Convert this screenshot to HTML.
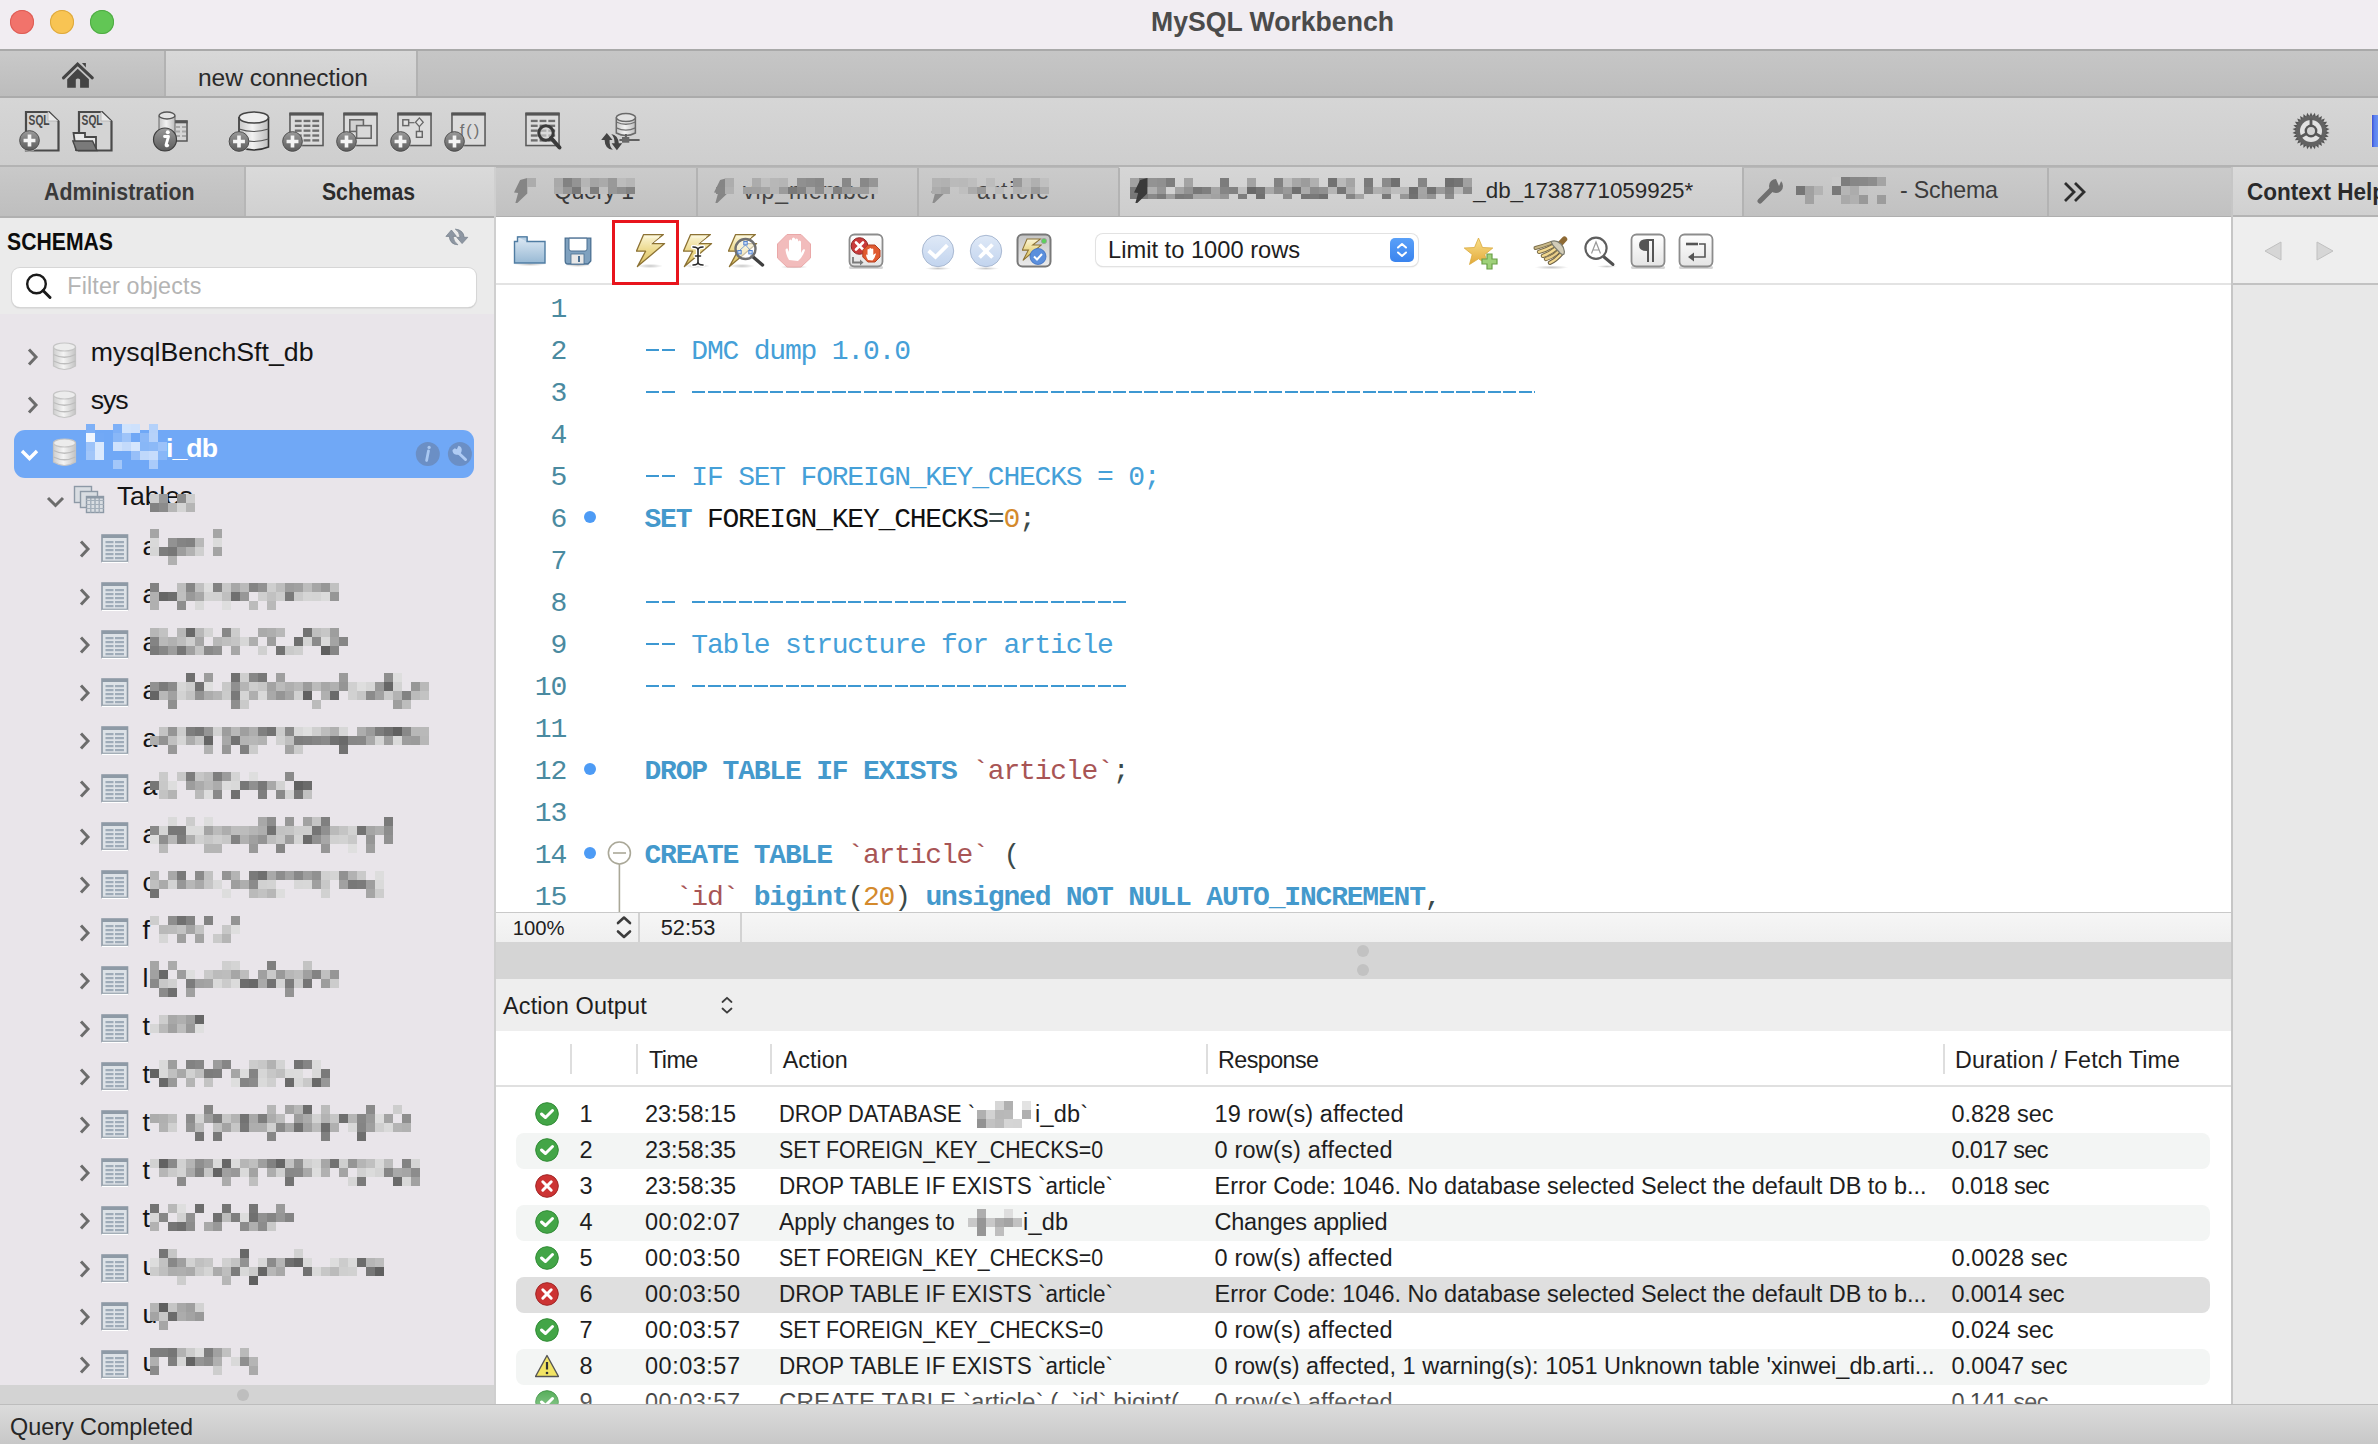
<!DOCTYPE html>
<html><head><meta charset="utf-8">
<style>
*{margin:0;padding:0;box-sizing:border-box}
html,body{width:2378px;height:1444px;overflow:hidden;background:#e9e5ea;font-family:"Liberation Sans",sans-serif;position:relative}
.a{position:absolute}
.t{position:absolute;white-space:nowrap;line-height:1}
.ln{position:absolute;left:0;width:70px;text-align:right;height:42px;line-height:42px;font-family:"Liberation Mono",monospace;font-size:28px;letter-spacing:-1.2px;color:#4a8aa0;white-space:nowrap}
.code{position:absolute;left:148.5px;height:42px;line-height:42px;font-family:"Liberation Mono",monospace;font-size:28px;letter-spacing:-1.2px;color:#111;white-space:pre}
.kw{font-weight:bold;color:#4499cc}.cm{color:#45a0d8}.st{color:#a85555}.nu{color:#d48a2c}.pu{color:#3b4a4a}
.hid{color:transparent}
.blur{display:inline-block;height:22px;vertical-align:-3px}
</style></head><body>
<svg class="a" style="left:0;top:0;width:0;height:0"><defs>
<linearGradient id="gBolt" x1="0" y1="0" x2="0" y2="1"><stop offset="0" stop-color="#fbf6d8"/><stop offset="0.5" stop-color="#ecd98c"/><stop offset="1" stop-color="#d9bf62"/></linearGradient>
<linearGradient id="gBoltG" x1="0" y1="0" x2="0" y2="1"><stop offset="0" stop-color="#8a8a8a"/><stop offset="1" stop-color="#6a6a6a"/></linearGradient>
<linearGradient id="gFold" x1="0" y1="0" x2="0" y2="1"><stop offset="0" stop-color="#dde9f4"/><stop offset="1" stop-color="#98b9d4"/></linearGradient>
<linearGradient id="gBtn" x1="0" y1="0" x2="0" y2="1"><stop offset="0" stop-color="#ffffff"/><stop offset="1" stop-color="#e4e4e4"/></linearGradient>
<linearGradient id="gCirc" x1="0" y1="0" x2="0" y2="1"><stop offset="0" stop-color="#dfe9f7"/><stop offset="1" stop-color="#c2d4ee"/></linearGradient>
<linearGradient id="gPlus" x1="0" y1="0" x2="0" y2="1"><stop offset="0" stop-color="#9a9a9a"/><stop offset="1" stop-color="#5c5c5c"/></linearGradient>
<linearGradient id="gDb" x1="0" y1="0" x2="1" y2="0"><stop offset="0" stop-color="#c8c8c8"/><stop offset="0.45" stop-color="#f2f2f2"/><stop offset="1" stop-color="#bdbdbd"/></linearGradient>
<linearGradient id="gDbS" x1="0" y1="0" x2="1" y2="0"><stop offset="0" stop-color="#cfcfcf"/><stop offset="0.45" stop-color="#f4f4f4"/><stop offset="1" stop-color="#c4c4c4"/></linearGradient>
<radialGradient id="gShadow"><stop offset="0" stop-color="#000" stop-opacity="0.22"/><stop offset="1" stop-color="#000" stop-opacity="0"/></radialGradient>



</defs></svg>
<div class="a" style="left:0px;top:0px;width:2378px;height:50px;background:#f1edf2;"></div>
<div class="a" style="left:0px;top:49px;width:2378px;height:2px;background:#a9a9a9;"></div>
<div class="a" style="left:10px;top:10px;width:24px;height:24px;background:#f1736b;border-radius:50%;box-shadow:inset 0 0 0 1px #dd5d55"></div>
<div class="a" style="left:50px;top:10px;width:24px;height:24px;background:#f8c453;border-radius:50%;box-shadow:inset 0 0 0 1px #dda83d"></div>
<div class="a" style="left:90px;top:10px;width:24px;height:24px;background:#62c655;border-radius:50%;box-shadow:inset 0 0 0 1px #4fab44"></div>
<div class="t" style="left:1151px;top:8.47px;font-size:27.8px;color:#4b4b4b;font-weight:bold;transform:scaleX(0.9572);transform-origin:0 0;">MySQL Workbench</div>
<div class="a" style="left:0px;top:51px;width:2378px;height:46px;background:linear-gradient(#c6c6c6,#bdbdbd);"></div>
<div class="a" style="left:0px;top:51px;width:165px;height:46px;background:linear-gradient(#c9c9c9,#bcbcbc);"></div>
<div class="a" style="left:165px;top:51px;width:252px;height:46px;background:linear-gradient(#d8d8d8,#cdcdcd);"></div>
<div class="a" style="left:164px;top:51px;width:2px;height:46px;background:#b2b2b2;"></div>
<div class="a" style="left:416px;top:51px;width:2px;height:46px;background:#b2b2b2;"></div>
<div class="t" style="left:198px;top:65.88px;font-size:24.6px;color:#2a2a2a;letter-spacing:-0.073px;">new connection</div>
<svg class="a" style="left:55px;top:55px" width="45" height="40" viewBox="0 0 45 40"><path d="M8.5 22.8 L22.6 9.2 L37.3 22.8" fill="none" stroke="#444" stroke-width="3.1" stroke-linecap="round"/><path d="M26.9 8 H30.9 V12.6 Z" fill="#444"/><path d="M12.2 24.3 L22.7 13.8 L33.9 24.3 V32.8 H25.1 V24.6 Q22.9 22.4 20.8 24.6 V32.8 H12.2 Z" fill="#444"/></svg>
<div class="a" style="left:0px;top:96px;width:2378px;height:2px;background:#ababab;"></div>
<div class="a" style="left:0px;top:98px;width:2378px;height:68px;background:linear-gradient(#d6d6d6,#cecece);"></div>
<div class="a" style="left:0px;top:165px;width:2378px;height:2px;background:#b3b3b3;"></div>
<svg class="a" style="left:15px;top:110px" width="50" height="44" viewBox="0 0 50 44"><path d="M11 2 H34 L43.5 11.5 V40.5 H11 Z" fill="#d4d4d4" stroke="#4a4a4a" stroke-width="2.2"/><path d="M33 1.5 V11 H43" fill="#eaeaea" stroke="#b0b0b0" stroke-width="0.8"/><text x="13.6" y="15" font-family="Liberation Sans" font-weight="bold" font-size="14" fill="#474747" textLength="21" lengthAdjust="spacingAndGlyphs">SQL</text><svg x="3" y="19" width="23" height="23" viewBox="0 0 24 24"><circle cx="12" cy="12.8" r="10.8" fill="#e4e4e4" opacity="0.7"/><circle cx="12" cy="12" r="10.3" fill="url(#gPlus)" stroke="#4a4a4a" stroke-width="1"/><path d="M12 5.8 V18.2 M5.8 12 H18.2" stroke="#f4f4f4" stroke-width="3.8"/></svg></svg>
<svg class="a" style="left:72px;top:110px" width="50" height="44" viewBox="0 0 50 44"><path d="M7 2 H30 L39.5 11.5 V40.5 H7 Z" fill="#d4d4d4" stroke="#4a4a4a" stroke-width="2.2"/><path d="M29 1.5 V11 H39" fill="#eaeaea" stroke="#b0b0b0" stroke-width="0.8"/><text x="9.6" y="15" font-family="Liberation Sans" font-weight="bold" font-size="14" fill="#474747" textLength="21" lengthAdjust="spacingAndGlyphs">SQL</text><path d="M1.5 23 H13 V27 H24 V40 H4 Z" fill="#e8e8e8" stroke="#474747" stroke-width="1.8"/><path d="M0.8 31 H20.5 L25 40.5 H4.5 Z" fill="#7a7a7a" stroke="#474747" stroke-width="1.4"/></svg>
<svg class="a" style="left:150px;top:108px" width="42" height="46" viewBox="0 0 42 46"><rect x="17.5" y="13" width="19.5" height="20" fill="#d6d6d6" stroke="#555" stroke-width="1.5"/><rect x="17" y="12.5" width="20.5" height="2.8" fill="#555"/><rect x="20" y="18" width="4" height="2" fill="#a8a8a8"/><rect x="20" y="22.5" width="4" height="2" fill="#a8a8a8"/><rect x="20" y="27" width="4" height="2" fill="#a8a8a8"/><rect x="26" y="18" width="4" height="2" fill="#a8a8a8"/><rect x="26" y="22.5" width="4" height="2" fill="#a8a8a8"/><rect x="26" y="27" width="4" height="2" fill="#a8a8a8"/><rect x="32" y="18" width="4" height="2" fill="#a8a8a8"/><rect x="32" y="22.5" width="4" height="2" fill="#a8a8a8"/><rect x="32" y="27" width="4" height="2" fill="#a8a8a8"/><path d="M9 8 V26 Q17 29 25 26 V8" fill="url(#gDb)" stroke="#666" stroke-width="1"/><ellipse cx="17" cy="7.5" rx="8" ry="3.5" fill="#e4e4e4" stroke="#555" stroke-width="1.4"/><circle cx="15" cy="31.5" r="11.5" fill="url(#gPlus)" stroke="#3e3e3e" stroke-width="1.2"/><circle cx="17.8" cy="24.2" r="2" fill="#fff"/><path d="M14.5 28.5 H18.5 L16 37 Q15.8 38.6 17.8 37.5" fill="none" stroke="#fff" stroke-width="2.8" stroke-linecap="round" stroke-linejoin="round"/></svg>
<svg class="a" style="left:225px;top:108px" width="48" height="48" viewBox="0 0 48 48"><path d="M14 9 V39 Q28.5 45 43.5 39 V9" fill="url(#gDb)" stroke="#333" stroke-width="1.6"/><path d="M14 21 Q28.5 26 43.5 21 M14 31 Q28.5 36 43.5 31" fill="none" stroke="#555" stroke-width="1.2"/><ellipse cx="28.8" cy="9.5" rx="14.6" ry="5.5" fill="#ededed" stroke="#444" stroke-width="1.6"/><svg x="2.5" y="22" width="23" height="23" viewBox="0 0 24 24"><circle cx="12" cy="12.8" r="10.8" fill="#e4e4e4" opacity="0.7"/><circle cx="12" cy="12" r="10.3" fill="url(#gPlus)" stroke="#4a4a4a" stroke-width="1"/><path d="M12 5.8 V18.2 M5.8 12 H18.2" stroke="#f4f4f4" stroke-width="3.8"/></svg></svg>
<svg class="a" style="left:276px;top:108px" width="50" height="48" viewBox="0 0 50 48"><svg x="13" y="4" width="35" height="35" viewBox="0 0 36 36"><svg width="100%" height="100%" viewBox="0 0 36 36"><rect x="1" y="1.5" width="34" height="33" fill="#dcdcdc" stroke="#5a5a5a" stroke-width="1.6"/><rect x="0.5" y="0.5" width="35" height="3.2" fill="#555"/></svg><rect x="6" y="8" width="7" height="2.4" fill="#6e6e6e"/><rect x="6" y="13" width="7" height="2.4" fill="#6e6e6e"/><rect x="6" y="18" width="7" height="2.4" fill="#6e6e6e"/><rect x="6" y="23" width="7" height="2.4" fill="#6e6e6e"/><rect x="6" y="28" width="7" height="2.4" fill="#6e6e6e"/><rect x="15" y="8" width="7" height="2.4" fill="#6e6e6e"/><rect x="15" y="13" width="7" height="2.4" fill="#6e6e6e"/><rect x="15" y="18" width="7" height="2.4" fill="#6e6e6e"/><rect x="15" y="23" width="7" height="2.4" fill="#6e6e6e"/><rect x="15" y="28" width="7" height="2.4" fill="#6e6e6e"/><rect x="24" y="8" width="7" height="2.4" fill="#6e6e6e"/><rect x="24" y="13" width="7" height="2.4" fill="#6e6e6e"/><rect x="24" y="18" width="7" height="2.4" fill="#6e6e6e"/><rect x="24" y="23" width="7" height="2.4" fill="#6e6e6e"/><rect x="24" y="28" width="7" height="2.4" fill="#6e6e6e"/></svg><svg x="5" y="22" width="23" height="23" viewBox="0 0 24 24"><circle cx="12" cy="12.8" r="10.8" fill="#e4e4e4" opacity="0.7"/><circle cx="12" cy="12" r="10.3" fill="url(#gPlus)" stroke="#4a4a4a" stroke-width="1"/><path d="M12 5.8 V18.2 M5.8 12 H18.2" stroke="#f4f4f4" stroke-width="3.8"/></svg></svg>
<svg class="a" style="left:330px;top:108px" width="50" height="48" viewBox="0 0 50 48"><svg x="13" y="4" width="35" height="35" viewBox="0 0 36 36"><svg width="100%" height="100%" viewBox="0 0 36 36"><rect x="1" y="1.5" width="34" height="33" fill="#dcdcdc" stroke="#5a5a5a" stroke-width="1.6"/><rect x="0.5" y="0.5" width="35" height="3.2" fill="#555"/></svg><rect x="7" y="8" width="14" height="12" fill="#d0d0d0" stroke="#666" stroke-width="1.6"/><rect x="14" y="14" width="15" height="13" fill="#d8d8d8" stroke="#666" stroke-width="1.6"/></svg><svg x="5" y="22" width="23" height="23" viewBox="0 0 24 24"><circle cx="12" cy="12.8" r="10.8" fill="#e4e4e4" opacity="0.7"/><circle cx="12" cy="12" r="10.3" fill="url(#gPlus)" stroke="#4a4a4a" stroke-width="1"/><path d="M12 5.8 V18.2 M5.8 12 H18.2" stroke="#f4f4f4" stroke-width="3.8"/></svg></svg>
<svg class="a" style="left:384px;top:108px" width="50" height="48" viewBox="0 0 50 48"><svg x="13" y="4" width="35" height="35" viewBox="0 0 36 36"><svg width="100%" height="100%" viewBox="0 0 36 36"><rect x="1" y="1.5" width="34" height="33" fill="#dcdcdc" stroke="#5a5a5a" stroke-width="1.6"/><rect x="0.5" y="0.5" width="35" height="3.2" fill="#555"/></svg><rect x="6" y="8" width="6" height="6" fill="#e2e2e2" stroke="#666" stroke-width="1.5"/><path d="M12 11 H18" stroke="#666" stroke-width="1.2"/><path d="M23 6 L27 10.5 L23 15 L19 10.5 Z" fill="#e2e2e2" stroke="#666" stroke-width="1.3"/><path d="M23 15 V20" stroke="#666" stroke-width="1.2"/><rect x="20" y="20" width="6" height="6" fill="#e2e2e2" stroke="#666" stroke-width="1.5"/></svg><svg x="5" y="22" width="23" height="23" viewBox="0 0 24 24"><circle cx="12" cy="12.8" r="10.8" fill="#e4e4e4" opacity="0.7"/><circle cx="12" cy="12" r="10.3" fill="url(#gPlus)" stroke="#4a4a4a" stroke-width="1"/><path d="M12 5.8 V18.2 M5.8 12 H18.2" stroke="#f4f4f4" stroke-width="3.8"/></svg></svg>
<svg class="a" style="left:438px;top:108px" width="50" height="48" viewBox="0 0 50 48"><svg x="13" y="4" width="35" height="35" viewBox="0 0 36 36"><svg width="100%" height="100%" viewBox="0 0 36 36"><rect x="1" y="1.5" width="34" height="33" fill="#dcdcdc" stroke="#5a5a5a" stroke-width="1.6"/><rect x="0.5" y="0.5" width="35" height="3.2" fill="#555"/></svg><text x="9" y="25" font-family="Liberation Sans" font-size="17" fill="#707070" textLength="20" lengthAdjust="spacing">f()</text></svg><svg x="5" y="22" width="23" height="23" viewBox="0 0 24 24"><circle cx="12" cy="12.8" r="10.8" fill="#e4e4e4" opacity="0.7"/><circle cx="12" cy="12" r="10.3" fill="url(#gPlus)" stroke="#4a4a4a" stroke-width="1"/><path d="M12 5.8 V18.2 M5.8 12 H18.2" stroke="#f4f4f4" stroke-width="3.8"/></svg></svg>
<svg class="a" style="left:522px;top:108px" width="42" height="44" viewBox="0 0 42 44"><svg x="3" y="4" width="35" height="35" viewBox="0 0 36 36"><svg width="100%" height="100%" viewBox="0 0 36 36"><rect x="1" y="1.5" width="34" height="33" fill="#dcdcdc" stroke="#5a5a5a" stroke-width="1.6"/><rect x="0.5" y="0.5" width="35" height="3.2" fill="#555"/></svg><rect x="6" y="8" width="7" height="2.4" fill="#6e6e6e"/><rect x="6" y="13" width="7" height="2.4" fill="#6e6e6e"/><rect x="6" y="18" width="7" height="2.4" fill="#6e6e6e"/><rect x="6" y="23" width="7" height="2.4" fill="#6e6e6e"/><rect x="6" y="28" width="7" height="2.4" fill="#6e6e6e"/><rect x="15" y="8" width="7" height="2.4" fill="#6e6e6e"/><rect x="15" y="13" width="7" height="2.4" fill="#6e6e6e"/><rect x="15" y="18" width="7" height="2.4" fill="#6e6e6e"/><rect x="15" y="23" width="7" height="2.4" fill="#6e6e6e"/><rect x="15" y="28" width="7" height="2.4" fill="#6e6e6e"/><rect x="24" y="8" width="7" height="2.4" fill="#6e6e6e"/><rect x="24" y="13" width="7" height="2.4" fill="#6e6e6e"/><rect x="24" y="18" width="7" height="2.4" fill="#6e6e6e"/><rect x="24" y="23" width="7" height="2.4" fill="#6e6e6e"/><rect x="24" y="28" width="7" height="2.4" fill="#6e6e6e"/></svg><circle cx="24" cy="25" r="7.2" fill="#d8d8d8" fill-opacity="0.6" stroke="#3a3a3a" stroke-width="3"/><path d="M29 30 L37.5 39.5" stroke="#3a3a3a" stroke-width="4" stroke-linecap="round"/></svg>
<svg class="a" style="left:595px;top:105px" width="55" height="55" viewBox="0 0 55 55"><path d="M21.3 12.6 V28 Q30.9 33 40.4 28 V12.6" fill="url(#gDb)" stroke="#6a6a6a" stroke-width="1.5"/><path d="M21.3 17 Q30.9 21.5 40.4 17 M21.3 22.8 Q30.9 27.3 40.4 22.8" fill="none" stroke="#707070" stroke-width="1.3"/><ellipse cx="30.9" cy="12.6" rx="9.6" ry="4" fill="#e2e2e2" stroke="#6a6a6a" stroke-width="1.5"/><path d="M30.9 29 V32.5 M24.4 34.9 H44.6" stroke="#606060" stroke-width="2"/><rect x="27" y="32" width="7.3" height="5.7" fill="#686868"/><path d="M6.2 35 L11.8 28 L17.6 35 L14.6 35 Q14.2 41.5 17.8 44.8 Q9.8 44 9.6 35 Z" fill="#444"/><path d="M16.2 29 Q23 30 23.8 38.3 L27.2 38.3 L21.9 45.3 L16.6 38.3 L19.6 38.3 Q19.6 32 16.2 29 Z" fill="#444"/></svg>
<svg class="a" style="left:2291px;top:111px" width="40" height="40" viewBox="0 0 40 40"><g transform="translate(20,20)"><path d="M-1.9 -14.5 L0 -18.6 L1.9 -14.5 Z" fill="#555" transform="rotate(0)"/><path d="M-1.9 -14.5 L0 -18.6 L1.9 -14.5 Z" fill="#555" transform="rotate(12)"/><path d="M-1.9 -14.5 L0 -18.6 L1.9 -14.5 Z" fill="#555" transform="rotate(24)"/><path d="M-1.9 -14.5 L0 -18.6 L1.9 -14.5 Z" fill="#555" transform="rotate(36)"/><path d="M-1.9 -14.5 L0 -18.6 L1.9 -14.5 Z" fill="#555" transform="rotate(48)"/><path d="M-1.9 -14.5 L0 -18.6 L1.9 -14.5 Z" fill="#555" transform="rotate(60)"/><path d="M-1.9 -14.5 L0 -18.6 L1.9 -14.5 Z" fill="#555" transform="rotate(72)"/><path d="M-1.9 -14.5 L0 -18.6 L1.9 -14.5 Z" fill="#555" transform="rotate(84)"/><path d="M-1.9 -14.5 L0 -18.6 L1.9 -14.5 Z" fill="#555" transform="rotate(96)"/><path d="M-1.9 -14.5 L0 -18.6 L1.9 -14.5 Z" fill="#555" transform="rotate(108)"/><path d="M-1.9 -14.5 L0 -18.6 L1.9 -14.5 Z" fill="#555" transform="rotate(120)"/><path d="M-1.9 -14.5 L0 -18.6 L1.9 -14.5 Z" fill="#555" transform="rotate(132)"/><path d="M-1.9 -14.5 L0 -18.6 L1.9 -14.5 Z" fill="#555" transform="rotate(144)"/><path d="M-1.9 -14.5 L0 -18.6 L1.9 -14.5 Z" fill="#555" transform="rotate(156)"/><path d="M-1.9 -14.5 L0 -18.6 L1.9 -14.5 Z" fill="#555" transform="rotate(168)"/><path d="M-1.9 -14.5 L0 -18.6 L1.9 -14.5 Z" fill="#555" transform="rotate(180)"/><path d="M-1.9 -14.5 L0 -18.6 L1.9 -14.5 Z" fill="#555" transform="rotate(192)"/><path d="M-1.9 -14.5 L0 -18.6 L1.9 -14.5 Z" fill="#555" transform="rotate(204)"/><path d="M-1.9 -14.5 L0 -18.6 L1.9 -14.5 Z" fill="#555" transform="rotate(216)"/><path d="M-1.9 -14.5 L0 -18.6 L1.9 -14.5 Z" fill="#555" transform="rotate(228)"/><path d="M-1.9 -14.5 L0 -18.6 L1.9 -14.5 Z" fill="#555" transform="rotate(240)"/><path d="M-1.9 -14.5 L0 -18.6 L1.9 -14.5 Z" fill="#555" transform="rotate(252)"/><path d="M-1.9 -14.5 L0 -18.6 L1.9 -14.5 Z" fill="#555" transform="rotate(264)"/><path d="M-1.9 -14.5 L0 -18.6 L1.9 -14.5 Z" fill="#555" transform="rotate(276)"/><path d="M-1.9 -14.5 L0 -18.6 L1.9 -14.5 Z" fill="#555" transform="rotate(288)"/><path d="M-1.9 -14.5 L0 -18.6 L1.9 -14.5 Z" fill="#555" transform="rotate(300)"/><path d="M-1.9 -14.5 L0 -18.6 L1.9 -14.5 Z" fill="#555" transform="rotate(312)"/><path d="M-1.9 -14.5 L0 -18.6 L1.9 -14.5 Z" fill="#555" transform="rotate(324)"/><path d="M-1.9 -14.5 L0 -18.6 L1.9 -14.5 Z" fill="#555" transform="rotate(336)"/><path d="M-1.9 -14.5 L0 -18.6 L1.9 -14.5 Z" fill="#555" transform="rotate(348)"/><circle r="15.2" fill="#626262"/><circle r="11" fill="#e2e2e2"/><path d="M0 -4 V-12.5" stroke="#5a5a5a" stroke-width="2.8" transform="rotate(0)"/><path d="M0 -4 V-12.5" stroke="#5a5a5a" stroke-width="2.8" transform="rotate(120)"/><path d="M0 -4 V-12.5" stroke="#5a5a5a" stroke-width="2.8" transform="rotate(240)"/><circle r="6.4" fill="#555"/><circle r="4" fill="#d4d4d4"/></g></svg>
<div class="a" style="left:2371px;top:115px;width:7px;height:32px;background:linear-gradient(90deg,#3c4fd6,#5a80ee 40%,#6a92f2);border-left:1px solid #e0dccc"></div>
<div class="a" style="left:0px;top:167px;width:245px;height:50px;background:linear-gradient(#c9c9c9,#bebebe);"></div>
<div class="a" style="left:245px;top:167px;width:250px;height:50px;background:linear-gradient(#dadada,#d0d0d0);"></div>
<div class="a" style="left:244px;top:167px;width:2px;height:50px;background:#b6b6b6;"></div>
<div class="t" style="left:43.5px;top:180.93px;font-size:23px;color:#3a3a3a;font-weight:bold;transform:scaleX(0.9274);transform-origin:0 0;">Administration</div>
<div class="t" style="left:322px;top:180.93px;font-size:23px;color:#2c2c2c;font-weight:bold;transform:scaleX(0.9207);transform-origin:0 0;">Schemas</div>
<div class="a" style="left:0px;top:216px;width:495px;height:2px;background:#b0b0b0;"></div>
<div class="a" style="left:496px;top:167px;width:1736px;height:50px;background:linear-gradient(#cbcbcb,#c1c1c1);"></div>
<div class="a" style="left:496px;top:167px;width:1736px;height:1px;background:#b9b9b9;"></div>
<div class="a" style="left:1119px;top:167px;width:623px;height:50px;background:linear-gradient(#d6d6d6,#cdcdcd);"></div>
<div class="a" style="left:696px;top:168px;width:2px;height:48px;background:#b3b3b3;"></div>
<div class="a" style="left:917px;top:168px;width:2px;height:48px;background:#b3b3b3;"></div>
<div class="a" style="left:1118px;top:168px;width:2px;height:48px;background:#b3b3b3;"></div>
<div class="a" style="left:1742px;top:168px;width:2px;height:48px;background:#b3b3b3;"></div>
<div class="a" style="left:2047px;top:168px;width:2px;height:48px;background:#b3b3b3;"></div>
<div class="a" style="left:496px;top:216px;width:1736px;height:2px;background:#afafaf;"></div>
<svg class="a" style="left:513.6px;top:177px" width="16" height="28" viewBox="0 0 16 28"><path d="M6.1 3 L13.3 1 V16.5 L3.3 26 H1.4 L4.1 16 L0 15.4 Z" fill="#858585"/></svg>
<svg class="a" style="left:714px;top:177px" width="16" height="28" viewBox="0 0 16 28"><path d="M6.1 3 L13.3 1 V16.5 L3.3 26 H1.4 L4.1 16 L0 15.4 Z" fill="#858585"/></svg>
<svg class="a" style="left:931px;top:177px" width="16" height="28" viewBox="0 0 16 28"><path d="M6.1 3 L13.3 1 V16.5 L3.3 26 H1.4 L4.1 16 L0 15.4 Z" fill="#8c8c8c"/></svg>
<div class="t" style="left:554px;top:179.53px;font-size:23px;color:#3a3a3a;letter-spacing:-0.303px;">Query 1</div>
<svg class="a" style="left:0;top:0" width="2378" height="1444" shape-rendering="crispEdges"><rect x="527" y="178" width="9" height="9" fill="#acacac"/></svg>
<svg class="a" style="left:0;top:0" width="2378" height="1444" shape-rendering="crispEdges"><rect x="554" y="178" width="9" height="9" fill="#a9a9a9"/><rect x="563" y="178" width="9" height="9" fill="#828282"/><rect x="572" y="178" width="9" height="9" fill="#949494"/><rect x="581" y="178" width="9" height="9" fill="#b5b5b5"/><rect x="590" y="178" width="9" height="9" fill="#a5a5a5"/><rect x="599" y="178" width="9" height="9" fill="#aaaaaa"/><rect x="608" y="178" width="9" height="9" fill="#999999"/><rect x="617" y="178" width="9" height="9" fill="#bcbcbc"/><rect x="626" y="178" width="9" height="9" fill="#b6b6b6"/><rect x="554" y="187" width="9" height="7" fill="#acacac"/><rect x="563" y="187" width="9" height="7" fill="#969696"/><rect x="572" y="187" width="9" height="7" fill="#797979"/><rect x="581" y="187" width="9" height="7" fill="#bdbdbd"/><rect x="590" y="187" width="9" height="7" fill="#7e7e7e"/><rect x="599" y="187" width="9" height="7" fill="#bfbfbf"/><rect x="608" y="187" width="9" height="7" fill="#989898"/><rect x="617" y="187" width="9" height="7" fill="#8f8f8f"/><rect x="626" y="187" width="9" height="7" fill="#848484"/></svg>
<div class="t" style="left:743px;top:179.53px;font-size:23px;color:#444;letter-spacing:0.939px;">vip_member</div>
<svg class="a" style="left:0;top:0" width="2378" height="1444" shape-rendering="crispEdges"><rect x="716" y="187" width="9" height="7" fill="#868686"/></svg>
<svg class="a" style="left:0;top:0" width="2378" height="1444" shape-rendering="crispEdges"><rect x="725" y="178" width="9" height="9" fill="#adadad"/><rect x="725" y="187" width="9" height="7" fill="#b1b1b1"/></svg>
<svg class="a" style="left:0;top:0" width="2378" height="1444" shape-rendering="crispEdges"><rect x="752" y="178" width="9" height="9" fill="#acacac"/><rect x="761" y="178" width="9" height="9" fill="#bfbfbf"/><rect x="770" y="178" width="9" height="9" fill="#b7b7b7"/><rect x="779" y="178" width="9" height="9" fill="#b5b5b5"/><rect x="797" y="178" width="9" height="9" fill="#909090"/><rect x="806" y="178" width="9" height="9" fill="#8c8c8c"/><rect x="815" y="178" width="9" height="9" fill="#888888"/><rect x="842" y="178" width="9" height="9" fill="#888888"/><rect x="860" y="178" width="9" height="9" fill="#888888"/><rect x="869" y="178" width="9" height="9" fill="#969696"/><rect x="743" y="187" width="9" height="7" fill="#a0a0a0"/><rect x="752" y="187" width="9" height="7" fill="#a1a1a1"/><rect x="761" y="187" width="9" height="7" fill="#a6a6a6"/><rect x="770" y="187" width="9" height="7" fill="#b6b6b6"/><rect x="779" y="187" width="9" height="7" fill="#9b9b9b"/><rect x="788" y="187" width="9" height="7" fill="#797979"/><rect x="797" y="187" width="9" height="7" fill="#848484"/><rect x="806" y="187" width="9" height="7" fill="#a9a9a9"/><rect x="815" y="187" width="9" height="7" fill="#8c8c8c"/><rect x="824" y="187" width="9" height="7" fill="#b7b7b7"/><rect x="833" y="187" width="9" height="7" fill="#808080"/><rect x="842" y="187" width="9" height="7" fill="#999999"/><rect x="851" y="187" width="9" height="7" fill="#9f9f9f"/><rect x="860" y="187" width="9" height="7" fill="#9c9c9c"/><rect x="869" y="187" width="9" height="7" fill="#bcbcbc"/></svg>
<div class="t" style="left:977px;top:179.53px;font-size:23px;color:#444;letter-spacing:1.774px;">article</div>
<svg class="a" style="left:0;top:0" width="2378" height="1444" shape-rendering="crispEdges"><rect x="932" y="178" width="9" height="9" fill="#b3b3b3"/><rect x="941" y="178" width="9" height="9" fill="#b1b1b1"/><rect x="950" y="178" width="9" height="9" fill="#bababa"/><rect x="959" y="178" width="9" height="9" fill="#b9b9b9"/><rect x="932" y="187" width="9" height="7" fill="#acacac"/><rect x="941" y="187" width="9" height="7" fill="#a5a5a5"/><rect x="959" y="187" width="9" height="7" fill="#bfbfbf"/></svg>
<svg class="a" style="left:0;top:0" width="2378" height="1444" shape-rendering="crispEdges"><rect x="968" y="178" width="9" height="9" fill="#bebebe"/><rect x="986" y="178" width="9" height="9" fill="#bcbcbc"/><rect x="1013" y="178" width="9" height="9" fill="#999999"/><rect x="1022" y="178" width="9" height="9" fill="#bbbbbb"/><rect x="1031" y="178" width="9" height="9" fill="#b0b0b0"/><rect x="1040" y="178" width="9" height="9" fill="#c0c0c0"/><rect x="968" y="187" width="9" height="7" fill="#ababab"/><rect x="977" y="187" width="9" height="7" fill="#9a9a9a"/><rect x="986" y="187" width="9" height="7" fill="#c2c2c2"/><rect x="995" y="187" width="9" height="7" fill="#b9b9b9"/><rect x="1004" y="187" width="9" height="7" fill="#c5c5c5"/><rect x="1013" y="187" width="9" height="7" fill="#b1b1b1"/><rect x="1022" y="187" width="9" height="7" fill="#b6b6b6"/><rect x="1031" y="187" width="9" height="7" fill="#9b9b9b"/><rect x="1040" y="187" width="9" height="7" fill="#aeaeae"/></svg>
<svg class="a" style="left:0;top:0" width="2378" height="1444" shape-rendering="crispEdges"><rect x="1130" y="178" width="9" height="9" fill="#a2a2a2"/><rect x="1139" y="178" width="9" height="9" fill="#797979"/><rect x="1148" y="178" width="9" height="9" fill="#939393"/><rect x="1157" y="178" width="9" height="9" fill="#909090"/><rect x="1166" y="178" width="9" height="9" fill="#7e7e7e"/><rect x="1184" y="178" width="9" height="9" fill="#a3a3a3"/><rect x="1220" y="178" width="9" height="9" fill="#7c7c7c"/><rect x="1247" y="178" width="9" height="9" fill="#a3a3a3"/><rect x="1274" y="178" width="9" height="9" fill="#828282"/><rect x="1283" y="178" width="9" height="9" fill="#bdbdbd"/><rect x="1292" y="178" width="9" height="9" fill="#a7a7a7"/><rect x="1301" y="178" width="9" height="9" fill="#9c9c9c"/><rect x="1310" y="178" width="9" height="9" fill="#b0b0b0"/><rect x="1328" y="178" width="9" height="9" fill="#727272"/><rect x="1337" y="178" width="9" height="9" fill="#b9b9b9"/><rect x="1346" y="178" width="9" height="9" fill="#a4a4a4"/><rect x="1364" y="178" width="9" height="9" fill="#7a7a7a"/><rect x="1382" y="178" width="9" height="9" fill="#8b8b8b"/><rect x="1391" y="178" width="9" height="9" fill="#707070"/><rect x="1418" y="178" width="9" height="9" fill="#858585"/><rect x="1445" y="178" width="9" height="9" fill="#6f6f6f"/><rect x="1454" y="178" width="9" height="9" fill="#757575"/><rect x="1463" y="178" width="9" height="9" fill="#a1a1a1"/><rect x="1130" y="187" width="9" height="7" fill="#797979"/><rect x="1139" y="187" width="9" height="7" fill="#9f9f9f"/><rect x="1148" y="187" width="9" height="7" fill="#afafaf"/><rect x="1157" y="187" width="9" height="7" fill="#969696"/><rect x="1175" y="187" width="9" height="7" fill="#a4a4a4"/><rect x="1184" y="187" width="9" height="7" fill="#929292"/><rect x="1193" y="187" width="9" height="7" fill="#777777"/><rect x="1202" y="187" width="9" height="7" fill="#7f7f7f"/><rect x="1211" y="187" width="9" height="7" fill="#a5a5a5"/><rect x="1220" y="187" width="9" height="7" fill="#858585"/><rect x="1229" y="187" width="9" height="7" fill="#828282"/><rect x="1238" y="187" width="9" height="7" fill="#bfbfbf"/><rect x="1247" y="187" width="9" height="7" fill="#696969"/><rect x="1256" y="187" width="9" height="7" fill="#747474"/><rect x="1265" y="187" width="9" height="7" fill="#a9a9a9"/><rect x="1274" y="187" width="9" height="7" fill="#8d8d8d"/><rect x="1283" y="187" width="9" height="7" fill="#999999"/><rect x="1292" y="187" width="9" height="7" fill="#707070"/><rect x="1301" y="187" width="9" height="7" fill="#ababab"/><rect x="1310" y="187" width="9" height="7" fill="#8b8b8b"/><rect x="1319" y="187" width="9" height="7" fill="#919191"/><rect x="1328" y="187" width="9" height="7" fill="#b5b5b5"/><rect x="1337" y="187" width="9" height="7" fill="#757575"/><rect x="1346" y="187" width="9" height="7" fill="#adadad"/><rect x="1364" y="187" width="9" height="7" fill="#828282"/><rect x="1373" y="187" width="9" height="7" fill="#b0b0b0"/><rect x="1382" y="187" width="9" height="7" fill="#aaaaaa"/><rect x="1391" y="187" width="9" height="7" fill="#bdbdbd"/><rect x="1400" y="187" width="9" height="7" fill="#b9b9b9"/><rect x="1409" y="187" width="9" height="7" fill="#6e6e6e"/><rect x="1418" y="187" width="9" height="7" fill="#a5a5a5"/><rect x="1427" y="187" width="9" height="7" fill="#737373"/><rect x="1436" y="187" width="9" height="7" fill="#9b9b9b"/><rect x="1445" y="187" width="9" height="7" fill="#848484"/><rect x="1454" y="187" width="9" height="7" fill="#bababa"/><rect x="1463" y="187" width="9" height="7" fill="#8a8a8a"/></svg>
<svg class="a" style="left:0;top:0" width="2378" height="1444" shape-rendering="crispEdges"><rect x="1130" y="194" width="9" height="5" fill="#777777"/><rect x="1139" y="194" width="9" height="5" fill="#797979"/><rect x="1148" y="194" width="9" height="5" fill="#898989"/><rect x="1157" y="194" width="9" height="5" fill="#7b7b7b"/><rect x="1166" y="194" width="9" height="5" fill="#9f9f9f"/><rect x="1175" y="194" width="9" height="5" fill="#7a7a7a"/><rect x="1184" y="194" width="9" height="5" fill="#7d7d7d"/><rect x="1193" y="194" width="9" height="5" fill="#a7a7a7"/><rect x="1202" y="194" width="9" height="5" fill="#a7a7a7"/><rect x="1211" y="194" width="9" height="5" fill="#a2a2a2"/><rect x="1220" y="194" width="9" height="5" fill="#969696"/><rect x="1238" y="194" width="9" height="5" fill="#7d7d7d"/><rect x="1256" y="194" width="9" height="5" fill="#707070"/><rect x="1283" y="194" width="9" height="5" fill="#8d8d8d"/><rect x="1301" y="194" width="9" height="5" fill="#767676"/><rect x="1310" y="194" width="9" height="5" fill="#797979"/><rect x="1319" y="194" width="9" height="5" fill="#717171"/><rect x="1346" y="194" width="9" height="5" fill="#858585"/><rect x="1355" y="194" width="9" height="5" fill="#a5a5a5"/><rect x="1382" y="194" width="9" height="5" fill="#797979"/><rect x="1400" y="194" width="9" height="5" fill="#969696"/><rect x="1409" y="194" width="9" height="5" fill="#717171"/><rect x="1418" y="194" width="9" height="5" fill="#a3a3a3"/><rect x="1427" y="194" width="9" height="5" fill="#959595"/><rect x="1445" y="194" width="9" height="5" fill="#8b8b8b"/></svg>
<svg class="a" style="left:1134px;top:177px" width="16" height="28" viewBox="0 0 16 28"><path d="M6.1 3 L13.3 1 V16.5 L3.3 26 H1.4 L4.1 16 L0 15.4 Z" fill="#3a3a3a"/></svg>
<div class="t" style="left:1473.3px;top:179.54px;font-size:22.4px;color:#2a2a2a;letter-spacing:-0.030px;">_db_1738771059925*</div>
<svg class="a" style="left:1757px;top:178px" width="32" height="26" viewBox="0 0 32 26"><path d="M3 23 L14 12" stroke="#707070" stroke-width="5" stroke-linecap="round"/><circle cx="19" cy="8" r="7" fill="#707070"/><path d="M19 1 L25 1 L22 8 Z" fill="#cdcdcd"/></svg>
<svg class="a" style="left:0;top:0" width="2378" height="1444" shape-rendering="crispEdges"><rect x="1832" y="177" width="9" height="9" fill="#cbcbcb"/><rect x="1841" y="177" width="9" height="9" fill="#7d7d7d"/><rect x="1850" y="177" width="9" height="9" fill="#878787"/><rect x="1859" y="177" width="9" height="9" fill="#888888"/><rect x="1868" y="177" width="9" height="9" fill="#8d8d8d"/><rect x="1877" y="177" width="9" height="9" fill="#a4a4a4"/><rect x="1796" y="186" width="9" height="9" fill="#767676"/><rect x="1805" y="186" width="9" height="9" fill="#a1a1a1"/><rect x="1814" y="186" width="9" height="9" fill="#b3b3b3"/><rect x="1832" y="186" width="9" height="9" fill="#797979"/><rect x="1841" y="186" width="9" height="9" fill="#b5b5b5"/><rect x="1850" y="186" width="9" height="9" fill="#acacac"/><rect x="1859" y="186" width="9" height="9" fill="#c4c4c4"/><rect x="1805" y="195" width="9" height="9" fill="#a2a2a2"/><rect x="1841" y="195" width="9" height="9" fill="#a9a9a9"/><rect x="1850" y="195" width="9" height="9" fill="#b0b0b0"/><rect x="1859" y="195" width="9" height="9" fill="#999999"/><rect x="1877" y="195" width="9" height="9" fill="#9c9c9c"/></svg>
<div class="t" style="left:1900px;top:179.06px;font-size:23.2px;color:#3c3c3c;letter-spacing:-0.183px;">- Schema</div>
<svg class="a" style="left:2062px;top:180px" width="28" height="24" viewBox="0 0 28 24"><path d="M3 3 L12 12 L3 21 M13 3 L22 12 L13 21" fill="none" stroke="#2e2e2e" stroke-width="2.8"/></svg>
<div class="a" style="left:496px;top:217px;width:1736px;height:695px;background:#ffffff;"></div>
<!-- EDITOR TOOLBAR -->
<div class="a" style="left:496px;top:283px;width:1736px;height:2px;background:#e3e3e3"></div>

<!-- folder -->
<svg class="a" style="left:513px;top:236px" width="34" height="30" viewBox="0 0 34 30"><ellipse cx="17" cy="28.5" rx="16" ry="1.6" fill="url(#gShadow)"/><path d="M1.5 5.5 V27 H32 V5.5 H14 V1 H4.5 V5.5 Z" fill="url(#gFold)" stroke="#4f7ca2" stroke-width="1.4"/><path d="M4.5 1 H14 V5.5" fill="#b9d0e4" stroke="#4f7ca2" stroke-width="1.2"/></svg>
<!-- floppy -->
<svg class="a" style="left:564px;top:237px" width="28" height="30" viewBox="0 0 28 30"><ellipse cx="14" cy="28.5" rx="13" ry="1.5" fill="url(#gShadow)"/><path d="M1.2 1.2 H26.8 V24 L24 27 H4 Q1.2 27 1.2 24 Z" fill="#7fa1bf" stroke="#4a6f91" stroke-width="1.3"/><path d="M5 1.2 V12 Q5 14 7 14 H21 Q23 14 23 12 V1.2 Z" fill="#ffffff" stroke="#4a6f91" stroke-width="1"/><rect x="7" y="17" width="13" height="10" fill="#e8e8e8" stroke="#4a6f91" stroke-width="0.8"/><rect x="14" y="19" width="2" height="6" fill="#4a6f91"/></svg>
<!-- red box -->
<div class="a" style="left:612px;top:220px;width:67px;height:65px;border:3.7px solid #e8141c"></div>
<svg class="a" style="left:636px;top:234px" width="30" height="34"><svg width="100%" height="100%" viewBox="0 0 30 34"><ellipse cx="14" cy="32" rx="13" ry="2.2" fill="url(#gShadow)"/><path d="M7.6 0.6 L27.4 0.6 L16 9.6 L28.6 9.6 L1.4 32.6 L9.6 17.2 L0.4 17.2 Z" fill="url(#gBolt)" stroke="#8c7234" stroke-width="1.3" stroke-linejoin="round"/><path d="M9 3 L23 3 L14 10.5" fill="none" stroke="#fffbe6" stroke-width="1" opacity="0.8"/></svg></svg>
<!-- bolt cursor -->
<svg class="a" style="left:683px;top:234px" width="30" height="34"><svg width="100%" height="100%" viewBox="0 0 30 34"><ellipse cx="14" cy="32" rx="13" ry="2.2" fill="url(#gShadow)"/><path d="M7.6 0.6 L27.4 0.6 L16 9.6 L28.6 9.6 L1.4 32.6 L9.6 17.2 L0.4 17.2 Z" fill="url(#gBolt)" stroke="#8c7234" stroke-width="1.3" stroke-linejoin="round"/><path d="M9 3 L23 3 L14 10.5" fill="none" stroke="#fffbe6" stroke-width="1" opacity="0.8"/></svg></svg>
<svg class="a" style="left:691px;top:245px" width="14" height="22" viewBox="0 0 14 22"><path d="M2 2 Q7 2 7 5 Q7 2 12 2 M7 5 V17 M2 20 Q7 20 7 17 Q7 20 12 20 M4.5 11 H9.5" fill="none" stroke="#ffffff" stroke-width="4.2" stroke-linecap="round"/><path d="M2 2 Q7 2 7 5 Q7 2 12 2 M7 5 V17 M2 20 Q7 20 7 17 Q7 20 12 20 M4.5 11 H9.5" fill="none" stroke="#2a2a2a" stroke-width="1.6" stroke-linecap="round"/></svg>
<!-- bolt magnifier -->
<svg class="a" style="left:728px;top:234px" width="30" height="34"><svg width="100%" height="100%" viewBox="0 0 30 34"><ellipse cx="14" cy="32" rx="13" ry="2.2" fill="url(#gShadow)"/><path d="M7.6 0.6 L27.4 0.6 L16 9.6 L28.6 9.6 L1.4 32.6 L9.6 17.2 L0.4 17.2 Z" fill="url(#gBolt)" stroke="#8c7234" stroke-width="1.3" stroke-linejoin="round"/><path d="M9 3 L23 3 L14 10.5" fill="none" stroke="#fffbe6" stroke-width="1" opacity="0.8"/></svg></svg>
<svg class="a" style="left:732px;top:236px" width="34" height="32" viewBox="0 0 34 32"><line x1="20" y1="20" x2="30.5" y2="29" stroke="#404040" stroke-width="3.4" stroke-linecap="round"/><circle cx="13.5" cy="13" r="10" fill="#ffffff" fill-opacity="0.55" stroke="#707070" stroke-width="2.4"/><rect x="11.8" y="5.5" width="3.4" height="3.4" fill="#c9daf2" stroke="#4a7ed0" stroke-width="0.9"/><rect x="5.8" y="14.5" width="3.4" height="3.4" fill="#c9daf2" stroke="#4a7ed0" stroke-width="0.9"/><rect x="16.8" y="14.5" width="3.4" height="3.4" fill="#c9daf2" stroke="#4a7ed0" stroke-width="0.9"/><path d="M13.5 9 L7.5 14.5 M13.5 9 L18.5 14.5" stroke="#4a7ed0" stroke-width="0.7"/></svg>
<!-- stop hand (disabled) -->
<svg class="a" style="left:776px;top:233px" width="36" height="36" viewBox="0 0 36 36"><ellipse cx="18" cy="34" rx="14" ry="1.6" fill="url(#gShadow)"/><path d="M11 1.5 H25 L34.5 11 V25 L25 34 H11 L1.5 25 V11 Z" fill="#f2bcbc" stroke="#eaa8a8" stroke-width="1"/><path d="M13 27 Q10 22 9.5 17 Q9.5 15 11.5 15.5 L13 19 V8 Q13 6.5 14.5 6.5 Q16 6.5 16 8 V15 V6 Q16 4.5 17.5 4.5 Q19 4.5 19 6 V15 V7 Q19 5.5 20.5 5.5 Q22 5.5 22 7 V15 V9 Q22 7.5 23.5 7.5 Q25 7.5 25 9 V20 Q26.5 16.5 28 16 Q29.5 16.5 28.5 18.5 Q26 25 22 28 Z" fill="#ffffff"/></svg>
<!-- stop on error -->
<svg class="a" style="left:848px;top:233px" width="36" height="37" viewBox="0 0 36 37"><rect x="1" y="33" width="34" height="3" rx="1.5" fill="#d5d5d5"/><rect x="1.5" y="1.5" width="33" height="32" rx="5" fill="url(#gBtn)" stroke="#8c8c8c" stroke-width="1.8"/><circle cx="11.5" cy="13" r="8.3" fill="#c83a3a" stroke="#8e2424" stroke-width="1"/><path d="M8 9.5 L15 16.5 M15 9.5 L8 16.5" stroke="#fff" stroke-width="2.6" stroke-linecap="round"/><path d="M19.8 12 H27 L32 17 V24 L27 29 H19.8 L14.8 24 V17 Z" fill="#e05a30" stroke="#b23f20" stroke-width="1"/><path d="M20 27 Q18 24 18 21.5 L19.5 22 V16.5 Q20.5 15.5 21.3 16.5 V21 V15.5 Q22.3 14.5 23.3 15.5 V21 V16 Q24.3 15 25.3 16 V22 Q26.5 20 28 20.5 Q27 25 24.5 27.5 Z" fill="#fff"/><path d="M5 24 V29.5 H13" fill="none" stroke="#7a7a7a" stroke-width="1.8"/><path d="M12 26.5 L15.5 29.5 L12 32.5 Z" fill="#7a7a7a"/></svg>
<!-- commit -->
<svg class="a" style="left:920px;top:234px" width="36" height="38" viewBox="0 0 36 38"><ellipse cx="18" cy="34.5" rx="13" ry="1.6" fill="url(#gShadow)"/><circle cx="18" cy="17" r="15.7" fill="url(#gCirc)" stroke="#a9b9d2" stroke-width="1"/><path d="M10 18 L15.5 23 L26 12.5" fill="none" stroke="#ffffff" stroke-width="3.8" stroke-linecap="square"/></svg>
<!-- rollback -->
<svg class="a" style="left:968px;top:234px" width="36" height="38" viewBox="0 0 36 38"><ellipse cx="18" cy="34.5" rx="13" ry="1.6" fill="url(#gShadow)"/><circle cx="18" cy="17" r="15.7" fill="url(#gCirc)" stroke="#a9b9d2" stroke-width="1"/><path d="M11.5 10.5 L24.5 23.5 M24.5 10.5 L11.5 23.5" fill="none" stroke="#ffffff" stroke-width="3.8"/></svg>
<!-- autocommit -->
<svg class="a" style="left:1016px;top:233px" width="36" height="36" viewBox="0 0 36 36"><defs><linearGradient id="gAC" x1="0" y1="0" x2="0" y2="1"><stop offset="0" stop-color="#c4c4c4"/><stop offset="1" stop-color="#ebebeb"/></linearGradient></defs><rect x="1.5" y="1.5" width="33" height="32" rx="5" fill="url(#gAC)" stroke="#787878" stroke-width="2"/><svg x="6" y="5" width="20" height="24" viewBox="0 0 30 34"><path d="M7.6 0.6 L27.4 0.6 L16 9.6 L28.6 9.6 L1.4 32.6 L9.6 17.2 L0.4 17.2 Z" fill="url(#gBolt)" stroke="#8c7234" stroke-width="1.6"/></svg><circle cx="22" cy="23.5" r="8" fill="#5b8fdc" stroke="#3f70c0" stroke-width="0.8"/><path d="M18 23.5 L21 26.5 L26 21" fill="none" stroke="#fff" stroke-width="2"/><circle cx="28" cy="8" r="2.6" fill="#5ad25a" stroke="#9a9a9a" stroke-width="0.8"/></svg>
<!-- limit dropdown -->
<div class="a" style="left:1096px;top:234px;width:322px;height:32px;background:#fff;border-radius:7px;box-shadow:0 0 0 1px #e2e2e2,0 1px 1.5px rgba(0,0,0,0.22)"></div>
<div class="t" style="left:1108px;top:239px;font-size:23.7px;color:#1e1e1e">Limit to 1000 rows</div>
<div class="a" style="left:1390px;top:238px;width:24px;height:24px;border-radius:5px;background:linear-gradient(#5aa0f8,#3a84ee)"></div>
<svg class="a" style="left:1390px;top:238px" width="24" height="24" viewBox="0 0 24 24"><path d="M8 9.5 L12 6 L16 9.5 M8 14.5 L12 18 L16 14.5" fill="none" stroke="#fff" stroke-width="2" stroke-linecap="round" stroke-linejoin="round"/></svg>
<!-- star add -->
<svg class="a" style="left:1463px;top:237px" width="36" height="34" viewBox="0 0 36 34"><defs><linearGradient id="gStar" x1="0" y1="0" x2="0" y2="1"><stop offset="0" stop-color="#f9e08a"/><stop offset="1" stop-color="#e3a93a"/></linearGradient></defs><path d="M15.5 1 L19.5 10.5 L29.8 11 L21.8 17.5 L24.5 27.5 L15.5 21.8 L6.5 27.5 L9.2 17.5 L1.2 11 L11.5 10.5 Z" fill="url(#gStar)" stroke="#d9a93c" stroke-width="0.8"/><path d="M24 17 H29 V22 H34 V27 H29 V32 H24 V27 H19 V22 H24 Z" fill="#9fd17a" stroke="#6aa048" stroke-width="1.2"/></svg>
<!-- broom -->
<svg class="a" style="left:1525px;top:230px" width="55" height="45" viewBox="0 0 55 45"><ellipse cx="26.5" cy="37.4" rx="17" ry="2" fill="url(#gShadow)"/>
<path d="M35 14 L39.5 9.2" stroke="#8e6a34" stroke-width="5.5" stroke-linecap="round"/>
<g fill="none" stroke-linecap="round">
<path d="M26 13 Q18 16 10.5 18" stroke="#7a6c48" stroke-width="4"/><path d="M26 13 Q18 16 10.5 18" stroke="#c8b888" stroke-width="2"/>
<path d="M28 16 Q21 20 14 21.8" stroke="#7a6c48" stroke-width="4.4"/><path d="M28 16 Q21 20 14 21.8" stroke="#f2d890" stroke-width="2.4"/>
<path d="M31 18.5 Q25 23.5 18 25.8" stroke="#7a6c48" stroke-width="4.4"/><path d="M31 18.5 Q25 23.5 18 25.8" stroke="#f2d890" stroke-width="2.4"/>
<path d="M34 21 Q28 27 21 29" stroke="#7a6c48" stroke-width="4.4"/><path d="M34 21 Q28 27 21 29" stroke="#e8cc88" stroke-width="2.4"/>
<path d="M36.5 23.5 Q31 30 25 32.8" stroke="#6e6248" stroke-width="4.4"/><path d="M36.5 23.5 Q31 30 25 32.8" stroke="#f2d890" stroke-width="2.2"/>
</g>
<path d="M26 11.5 Q31 9.5 36 14 Q40.5 19 39 24 Q37.5 25.5 35 23 L28 15.5 Z" fill="#d2ccb8" stroke="#7c7c70" stroke-width="1.2"/>
</svg>
<!-- find -->
<svg class="a" style="left:1583px;top:236px" width="34" height="33" viewBox="0 0 34 33"><ellipse cx="24" cy="30.5" rx="10" ry="1.5" fill="url(#gShadow)"/><line x1="21" y1="21" x2="30" y2="28.5" stroke="#505050" stroke-width="3" stroke-linecap="round"/><circle cx="13" cy="12.3" r="10.6" fill="#fff" stroke="#5e5e5e" stroke-width="2.2"/><path d="M8.5 17.5 L13 6 L17.5 17.5 M10 14 H16" fill="none" stroke="#9a9a9a" stroke-width="1.2"/></svg>
<!-- pilcrow -->
<svg class="a" style="left:1630px;top:233px" width="36" height="37" viewBox="0 0 36 37"><rect x="1" y="33" width="34" height="3" rx="1.5" fill="#d5d5d5"/><rect x="1.5" y="1.5" width="33" height="32" rx="5" fill="url(#gBtn)" stroke="#8c8c8c" stroke-width="1.8"/><path d="M17 6 H24 V29 H22 V8 H19 V29 H17 V18 Q9 18 9 12 Q9 6 17 6 Z" fill="#555"/></svg>
<!-- wrap -->
<svg class="a" style="left:1678px;top:233px" width="36" height="37" viewBox="0 0 36 37"><rect x="1" y="33" width="34" height="3" rx="1.5" fill="#d5d5d5"/><rect x="1.5" y="1.5" width="33" height="32" rx="5" fill="url(#gBtn)" stroke="#8c8c8c" stroke-width="1.8"/><path d="M8 11 H20" stroke="#555" stroke-width="2.6"/><path d="M21 11 H27 V24 H14" fill="none" stroke="#555" stroke-width="1.6"/><path d="M10 24 L16 19.5 V28.5 Z" fill="#555"/></svg>

<div class="a" style="left:496px;top:285px;width:1736px;height:627px;overflow:hidden">
<div class="ln" style="top:3.8px">1</div>
<div class="ln" style="top:45.8px">2</div>
<div class="code" style="top:45.8px"><span class="cm"><span class="hid">--</span> DMC dump 1.0.0</span></div>
<div class="a" style="left:149.5px;top:63.8px;width:31.2px;height:2.3px;background:repeating-linear-gradient(90deg,#3d98d2 0 13.2px,transparent 13.2px 15.6px)"></div>
<div class="ln" style="top:87.8px">3</div>
<div class="a" style="left:149.5px;top:105.8px;width:31.2px;height:2.3px;background:repeating-linear-gradient(90deg,#3d98d2 0 13.2px,transparent 13.2px 15.6px)"></div>
<div class="a" style="left:196.3px;top:105.8px;width:842.4px;height:2.3px;background:repeating-linear-gradient(90deg,#3d98d2 0 13.2px,transparent 13.2px 15.6px)"></div>
<div class="ln" style="top:129.8px">4</div>
<div class="ln" style="top:171.8px">5</div>
<div class="code" style="top:171.8px"><span class="cm"><span class="hid">--</span> IF SET FOREIGN_KEY_CHECKS = 0;</span></div>
<div class="a" style="left:149.5px;top:189.8px;width:31.2px;height:2.3px;background:repeating-linear-gradient(90deg,#3d98d2 0 13.2px,transparent 13.2px 15.6px)"></div>
<div class="ln" style="top:213.8px">6</div>
<div class="code" style="top:213.8px"><b class="kw">SET</b> FOREIGN_KEY_CHECKS<span class="pu">=</span><span class="nu">0</span><span class="pu">;</span></div>
<div class="ln" style="top:255.8px">7</div>
<div class="ln" style="top:297.8px">8</div>
<div class="a" style="left:149.5px;top:315.8px;width:31.2px;height:2.3px;background:repeating-linear-gradient(90deg,#3d98d2 0 13.2px,transparent 13.2px 15.6px)"></div>
<div class="a" style="left:196.3px;top:315.8px;width:436.8px;height:2.3px;background:repeating-linear-gradient(90deg,#3d98d2 0 13.2px,transparent 13.2px 15.6px)"></div>
<div class="ln" style="top:339.8px">9</div>
<div class="code" style="top:339.8px"><span class="cm"><span class="hid">--</span> Table structure for article</span></div>
<div class="a" style="left:149.5px;top:357.8px;width:31.2px;height:2.3px;background:repeating-linear-gradient(90deg,#3d98d2 0 13.2px,transparent 13.2px 15.6px)"></div>
<div class="ln" style="top:381.8px">10</div>
<div class="a" style="left:149.5px;top:399.8px;width:31.2px;height:2.3px;background:repeating-linear-gradient(90deg,#3d98d2 0 13.2px,transparent 13.2px 15.6px)"></div>
<div class="a" style="left:196.3px;top:399.8px;width:436.8px;height:2.3px;background:repeating-linear-gradient(90deg,#3d98d2 0 13.2px,transparent 13.2px 15.6px)"></div>
<div class="ln" style="top:423.8px">11</div>
<div class="ln" style="top:465.8px">12</div>
<div class="code" style="top:465.8px"><b class="kw">DROP</b> <b class="kw">TABLE</b> <b class="kw">IF</b> <b class="kw">EXISTS</b> <span class="st">`article`</span><span class="pu">;</span></div>
<div class="ln" style="top:507.8px">13</div>
<div class="ln" style="top:549.8px">14</div>
<div class="code" style="top:549.8px"><b class="kw">CREATE</b> <b class="kw">TABLE</b> <span class="st">`article`</span> <span class="pu">(</span></div>
<div class="ln" style="top:591.8px">15</div>
<div class="code" style="top:591.8px">  <span class="st">`id`</span> <b class="kw">bigint</b><span class="pu">(</span><span class="nu">20</span><span class="pu">)</span> <b class="kw">unsigned</b> <b class="kw">NOT</b> <b class="kw">NULL</b> <b class="kw">AUTO_INCREMENT</b><span class="pu">,</span></div>
<div class="a" style="left:88px;top:225.8px;width:12px;height:12px;border-radius:50%;background:#4d9bf5"></div>
<div class="a" style="left:88px;top:477.8px;width:12px;height:12px;border-radius:50%;background:#4d9bf5"></div>
<div class="a" style="left:88px;top:561.8px;width:12px;height:12px;border-radius:50%;background:#4d9bf5"></div>
<svg class="a" style="left:111px;top:555.8px" width="25" height="80" viewBox="0 0 25 80"><circle cx="12.4" cy="12" r="11" fill="#fff" stroke="#aaa898" stroke-width="1.6"/><path d="M6 12 H19" stroke="#aaa898" stroke-width="1.6"/><path d="M12.4 23 V80" stroke="#aaa898" stroke-width="1.6"/></svg>
</div>
<div class="a" style="left:496px;top:912px;width:1736px;height:30px;background:linear-gradient(#f6f6f6,#efefef);"></div>
<div class="a" style="left:496px;top:912px;width:1736px;height:1px;background:#c9c9c9;"></div>
<div class="t" style="left:512.7px;top:918.42px;font-size:20.3px;color:#1e1e1e;letter-spacing:-0.040px;">100%</div>
<svg class="a" style="left:615px;top:915px" width="18" height="25" viewBox="0 0 18 25"><path d="M3 8 L9 2.5 L15 8 M3 16.5 L9 22 L15 16.5" fill="none" stroke="#3c3c3c" stroke-width="2.6" stroke-linejoin="round" stroke-linecap="round"/></svg>
<div class="a" style="left:638px;top:913px;width:2px;height:29px;background:#d2d2d2;"></div>
<div class="t" style="left:660.7px;top:917.15px;font-size:21.8px;color:#1e1e1e;letter-spacing:0.036px;">52:53</div>
<div class="a" style="left:740px;top:913px;width:2px;height:29px;background:#d2d2d2;"></div>
<div class="a" style="left:496px;top:942px;width:1736px;height:37px;background:#d5d5d5;"></div>
<div class="a" style="left:1357px;top:945px;width:12px;height:12px;background:#c2c2c2;border-radius:50%"></div>
<div class="a" style="left:1357px;top:964px;width:12px;height:12px;background:#c2c2c2;border-radius:50%"></div>
<div class="a" style="left:496px;top:979px;width:1736px;height:52px;background:#eeeeee;"></div>
<div class="t" style="left:503px;top:994.61px;font-size:23.5px;color:#1e1e1e;letter-spacing:0.109px;">Action Output</div>
<svg class="a" style="left:720px;top:996px" width="14" height="19" viewBox="0 0 14 19"><path d="M2.5 6 L7 1.8 L11.5 6 M2.5 12.5 L7 16.7 L11.5 12.5" fill="none" stroke="#3c3c3c" stroke-width="1.8" stroke-linejoin="round" stroke-linecap="round"/></svg>
<div class="a" style="left:496px;top:1031px;width:1736px;height:373px;background:#ffffff;"></div>
<div class="a" style="left:496px;top:1085px;width:1736px;height:2px;background:#e0e0e0;"></div>
<div class="a" style="left:570px;top:1044px;width:2px;height:30px;background:#dedede;"></div>
<div class="a" style="left:636px;top:1044px;width:2px;height:30px;background:#dedede;"></div>
<div class="a" style="left:770px;top:1044px;width:2px;height:30px;background:#dedede;"></div>
<div class="a" style="left:1206px;top:1044px;width:2px;height:30px;background:#dedede;"></div>
<div class="a" style="left:1943px;top:1044px;width:2px;height:30px;background:#dedede;"></div>
<div class="t" style="left:648.9px;top:1048.98px;font-size:23.3px;color:#1e1e1e;letter-spacing:-0.505px;">Time</div>
<div class="t" style="left:782.8px;top:1048.98px;font-size:23.3px;color:#1e1e1e;letter-spacing:0.008px;">Action</div>
<div class="t" style="left:1218px;top:1048.98px;font-size:23.3px;color:#1e1e1e;letter-spacing:-0.560px;">Response</div>
<div class="t" style="left:1955px;top:1048.98px;font-size:23.3px;color:#1e1e1e;letter-spacing:0.113px;">Duration / Fetch Time</div>
<div class="a" style="left:0;top:0;width:2378px;height:1404px;overflow:hidden">
<svg class="a" style="left:534.7px;top:1101.5px" width="24" height="24" viewBox="0 0 24 24"><circle cx="12" cy="12" r="11.3" fill="#43a547" stroke="#2f8a34" stroke-width="1"/><path d="M6.5 12 L10.5 15.5 L17.5 8.5" fill="none" stroke="#fff" stroke-width="3" stroke-linecap="round" stroke-linejoin="round"/></svg>
<div class="t" style="left:579.5px;top:1103.11px;font-size:23.5px;color:#1e1e1e;">1</div>
<div class="t" style="left:645px;top:1103.11px;font-size:23.5px;color:#1e1e1e;letter-spacing:-0.068px;">23:58:15</div>
<div class="t" style="left:778.6px;top:1103.11px;font-size:23.5px;color:#1e1e1e;transform:scaleX(0.9322);transform-origin:0 0;">DROP DATABASE `</div>
<div class="t" style="left:1214.5px;top:1103.11px;font-size:23.5px;color:#1e1e1e;letter-spacing:0.079px;">19 row(s) affected</div>
<div class="t" style="left:1951.5px;top:1103.11px;font-size:23.5px;color:#1e1e1e;letter-spacing:0.012px;">0.828 sec</div>
<div class="a" style="left:516px;top:1133px;width:1694px;height:36px;background:#f3f5f4;border-radius:8px"></div>
<svg class="a" style="left:534.7px;top:1137.5px" width="24" height="24" viewBox="0 0 24 24"><circle cx="12" cy="12" r="11.3" fill="#43a547" stroke="#2f8a34" stroke-width="1"/><path d="M6.5 12 L10.5 15.5 L17.5 8.5" fill="none" stroke="#fff" stroke-width="3" stroke-linecap="round" stroke-linejoin="round"/></svg>
<div class="t" style="left:579.5px;top:1139.11px;font-size:23.5px;color:#1e1e1e;">2</div>
<div class="t" style="left:645px;top:1139.11px;font-size:23.5px;color:#1e1e1e;letter-spacing:-0.068px;">23:58:35</div>
<div class="t" style="left:778.6px;top:1139.11px;font-size:23.5px;color:#1e1e1e;transform:scaleX(0.9082);transform-origin:0 0;">SET FOREIGN_KEY_CHECKS=0</div>
<div class="t" style="left:1214.5px;top:1139.11px;font-size:23.5px;color:#1e1e1e;letter-spacing:0.213px;">0 row(s) affected</div>
<div class="t" style="left:1951.5px;top:1139.11px;font-size:23.5px;color:#1e1e1e;letter-spacing:-0.613px;">0.017 sec</div>
<svg class="a" style="left:534.7px;top:1173.5px" width="24" height="24" viewBox="0 0 24 24"><circle cx="12" cy="12" r="11.3" fill="#cc3333" stroke="#a02525" stroke-width="1"/><path d="M7.8 7.8 L16.2 16.2 M16.2 7.8 L7.8 16.2" fill="none" stroke="#fff" stroke-width="3" stroke-linecap="round"/></svg>
<div class="t" style="left:579.5px;top:1175.11px;font-size:23.5px;color:#1e1e1e;">3</div>
<div class="t" style="left:645px;top:1175.11px;font-size:23.5px;color:#1e1e1e;letter-spacing:-0.068px;">23:58:35</div>
<div class="t" style="left:778.6px;top:1175.11px;font-size:23.5px;color:#1e1e1e;transform:scaleX(0.9579);transform-origin:0 0;">DROP TABLE IF EXISTS `article`</div>
<div class="t" style="left:1214.5px;top:1175.11px;font-size:23.5px;color:#1e1e1e;letter-spacing:-0.019px;">Error Code: 1046. No database selected Select the default DB to b...</div>
<div class="t" style="left:1951.5px;top:1175.11px;font-size:23.5px;color:#1e1e1e;letter-spacing:-0.488px;">0.018 sec</div>
<div class="a" style="left:516px;top:1205px;width:1694px;height:36px;background:#f3f5f4;border-radius:8px"></div>
<svg class="a" style="left:534.7px;top:1209.5px" width="24" height="24" viewBox="0 0 24 24"><circle cx="12" cy="12" r="11.3" fill="#43a547" stroke="#2f8a34" stroke-width="1"/><path d="M6.5 12 L10.5 15.5 L17.5 8.5" fill="none" stroke="#fff" stroke-width="3" stroke-linecap="round" stroke-linejoin="round"/></svg>
<div class="t" style="left:579.5px;top:1211.11px;font-size:23.5px;color:#1e1e1e;">4</div>
<div class="t" style="left:645px;top:1211.11px;font-size:23.5px;color:#1e1e1e;letter-spacing:0.503px;">00:02:07</div>
<div class="t" style="left:778.6px;top:1211.11px;font-size:23.5px;color:#1e1e1e;transform:scaleX(0.9742);transform-origin:0 0;">Apply changes to </div>
<div class="t" style="left:1214.5px;top:1211.11px;font-size:23.5px;color:#1e1e1e;letter-spacing:-0.242px;">Changes applied</div>
<svg class="a" style="left:534.7px;top:1245.5px" width="24" height="24" viewBox="0 0 24 24"><circle cx="12" cy="12" r="11.3" fill="#43a547" stroke="#2f8a34" stroke-width="1"/><path d="M6.5 12 L10.5 15.5 L17.5 8.5" fill="none" stroke="#fff" stroke-width="3" stroke-linecap="round" stroke-linejoin="round"/></svg>
<div class="t" style="left:579.5px;top:1247.11px;font-size:23.5px;color:#1e1e1e;">5</div>
<div class="t" style="left:645px;top:1247.11px;font-size:23.5px;color:#1e1e1e;letter-spacing:0.503px;">00:03:50</div>
<div class="t" style="left:778.6px;top:1247.11px;font-size:23.5px;color:#1e1e1e;transform:scaleX(0.9082);transform-origin:0 0;">SET FOREIGN_KEY_CHECKS=0</div>
<div class="t" style="left:1214.5px;top:1247.11px;font-size:23.5px;color:#1e1e1e;letter-spacing:0.213px;">0 row(s) affected</div>
<div class="t" style="left:1951.5px;top:1247.11px;font-size:23.5px;color:#1e1e1e;letter-spacing:0.114px;">0.0028 sec</div>
<div class="a" style="left:516px;top:1277px;width:1694px;height:36px;background:#dfdfdf;border-radius:8px"></div>
<svg class="a" style="left:534.7px;top:1281.5px" width="24" height="24" viewBox="0 0 24 24"><circle cx="12" cy="12" r="11.3" fill="#cc3333" stroke="#a02525" stroke-width="1"/><path d="M7.8 7.8 L16.2 16.2 M16.2 7.8 L7.8 16.2" fill="none" stroke="#fff" stroke-width="3" stroke-linecap="round"/></svg>
<div class="t" style="left:579.5px;top:1283.11px;font-size:23.5px;color:#1e1e1e;">6</div>
<div class="t" style="left:645px;top:1283.11px;font-size:23.5px;color:#1e1e1e;letter-spacing:0.503px;">00:03:50</div>
<div class="t" style="left:778.6px;top:1283.11px;font-size:23.5px;color:#1e1e1e;transform:scaleX(0.9579);transform-origin:0 0;">DROP TABLE IF EXISTS `article`</div>
<div class="t" style="left:1214.5px;top:1283.11px;font-size:23.5px;color:#1e1e1e;letter-spacing:-0.019px;">Error Code: 1046. No database selected Select the default DB to b...</div>
<div class="t" style="left:1951.5px;top:1283.11px;font-size:23.5px;color:#1e1e1e;letter-spacing:-0.220px;">0.0014 sec</div>
<svg class="a" style="left:534.7px;top:1317.5px" width="24" height="24" viewBox="0 0 24 24"><circle cx="12" cy="12" r="11.3" fill="#43a547" stroke="#2f8a34" stroke-width="1"/><path d="M6.5 12 L10.5 15.5 L17.5 8.5" fill="none" stroke="#fff" stroke-width="3" stroke-linecap="round" stroke-linejoin="round"/></svg>
<div class="t" style="left:579.5px;top:1319.11px;font-size:23.5px;color:#1e1e1e;">7</div>
<div class="t" style="left:645px;top:1319.11px;font-size:23.5px;color:#1e1e1e;letter-spacing:0.503px;">00:03:57</div>
<div class="t" style="left:778.6px;top:1319.11px;font-size:23.5px;color:#1e1e1e;transform:scaleX(0.9082);transform-origin:0 0;">SET FOREIGN_KEY_CHECKS=0</div>
<div class="t" style="left:1214.5px;top:1319.11px;font-size:23.5px;color:#1e1e1e;letter-spacing:0.213px;">0 row(s) affected</div>
<div class="t" style="left:1951.5px;top:1319.11px;font-size:23.5px;color:#1e1e1e;letter-spacing:0.012px;">0.024 sec</div>
<div class="a" style="left:516px;top:1349px;width:1694px;height:36px;background:#f3f5f4;border-radius:8px"></div>
<svg class="a" style="left:534.7px;top:1353.5px" width="24" height="24" viewBox="0 0 24 24"><path d="M12 1.5 L23.5 22.5 H0.5 Z" fill="#f2e464" stroke="#555" stroke-width="1.4" stroke-linejoin="round"/><path d="M12 8 V15.5" stroke="#333" stroke-width="2.2"/><circle cx="12" cy="19" r="1.3" fill="#333"/></svg>
<div class="t" style="left:579.5px;top:1355.11px;font-size:23.5px;color:#1e1e1e;">8</div>
<div class="t" style="left:645px;top:1355.11px;font-size:23.5px;color:#1e1e1e;letter-spacing:0.503px;">00:03:57</div>
<div class="t" style="left:778.6px;top:1355.11px;font-size:23.5px;color:#1e1e1e;transform:scaleX(0.9579);transform-origin:0 0;">DROP TABLE IF EXISTS `article`</div>
<div class="t" style="left:1214.5px;top:1355.11px;font-size:23.5px;color:#1e1e1e;letter-spacing:0.021px;">0 row(s) affected, 1 warning(s): 1051 Unknown table 'xinwei_db.arti...</div>
<div class="t" style="left:1951.5px;top:1355.11px;font-size:23.5px;color:#1e1e1e;letter-spacing:0.114px;">0.0047 sec</div>
<svg class="a" style="left:534.7px;top:1389.5px" width="24" height="24" viewBox="0 0 24 24"><circle cx="12" cy="12" r="11.3" fill="#43a547" stroke="#2f8a34" stroke-width="1"/><path d="M6.5 12 L10.5 15.5 L17.5 8.5" fill="none" stroke="#fff" stroke-width="3" stroke-linecap="round" stroke-linejoin="round"/></svg>
<div class="t" style="left:579.5px;top:1391.11px;font-size:23.5px;color:#1e1e1e;">9</div>
<div class="t" style="left:645px;top:1391.11px;font-size:23.5px;color:#1e1e1e;letter-spacing:0.503px;">00:03:57</div>
<div class="t" style="left:778.6px;top:1391.11px;font-size:23.5px;color:#1e1e1e;transform:scaleX(1.0279);transform-origin:0 0;">CREATE TABLE `article` (&nbsp;&nbsp;`id` bigint(</div>
<div class="t" style="left:1214.5px;top:1391.11px;font-size:23.5px;color:#1e1e1e;letter-spacing:0.213px;">0 row(s) affected</div>
<div class="t" style="left:1951.5px;top:1391.11px;font-size:23.5px;color:#1e1e1e;letter-spacing:-0.613px;">0.141 sec</div>
<svg class="a" style="left:0;top:0" width="2378" height="1444" shape-rendering="crispEdges"><rect x="995" y="1101" width="9" height="9" fill="#d6d6d6"/><rect x="1004" y="1101" width="9" height="9" fill="#b0b0b0"/><rect x="1022" y="1101" width="9" height="9" fill="#e3e3e3"/><rect x="977" y="1110" width="9" height="9" fill="#b0b0b0"/><rect x="986" y="1110" width="9" height="9" fill="#d2d2d2"/><rect x="995" y="1110" width="9" height="9" fill="#b8b8b8"/><rect x="1004" y="1110" width="9" height="9" fill="#b9b9b9"/><rect x="1022" y="1110" width="9" height="9" fill="#afafaf"/><rect x="977" y="1119" width="9" height="9" fill="#929292"/><rect x="986" y="1119" width="9" height="9" fill="#c2c2c2"/><rect x="995" y="1119" width="9" height="9" fill="#bbbbbb"/><rect x="1004" y="1119" width="9" height="9" fill="#d5d5d5"/><rect x="1013" y="1119" width="9" height="9" fill="#d4d4d4"/></svg>
<div class="t" style="left:1035px;top:1102.61px;font-size:23.5px;color:#1e1e1e;letter-spacing:0.185px;">i_db`</div>
<svg class="a" style="left:0;top:0" width="2378" height="1444" shape-rendering="crispEdges"><rect x="977" y="1209" width="9" height="9" fill="#aeaeae"/><rect x="1004" y="1209" width="9" height="9" fill="#dedede"/><rect x="968" y="1218" width="9" height="9" fill="#c8c8c8"/><rect x="977" y="1218" width="9" height="9" fill="#969696"/><rect x="986" y="1218" width="9" height="9" fill="#c8c8c8"/><rect x="995" y="1218" width="9" height="9" fill="#acacac"/><rect x="1004" y="1218" width="9" height="9" fill="#a4a4a4"/><rect x="1013" y="1218" width="9" height="9" fill="#c2c2c2"/><rect x="977" y="1227" width="9" height="9" fill="#969696"/><rect x="995" y="1227" width="9" height="9" fill="#bebebe"/></svg>
<div class="t" style="left:1023px;top:1210.61px;font-size:23.5px;color:#1e1e1e;letter-spacing:0.189px;">i_db</div>
<div class="a" style="left:496px;top:1384px;width:1736px;height:20px;background:linear-gradient(rgba(255,255,255,0),rgba(255,255,255,0.3));"></div>
</div>
<div class="a" style="left:2232px;top:167px;width:146px;height:1237px;background:#e8e8e8;"></div>
<div class="a" style="left:2232px;top:167px;width:146px;height:50px;background:linear-gradient(#dadada,#d0d0d0);"></div>
<div class="a" style="left:2232px;top:215px;width:146px;height:2px;background:#b4b4b4;"></div>
<div class="a" style="left:2231px;top:167px;width:2px;height:1237px;background:#c6c6c6;"></div>
<div class="t" style="left:2246.5px;top:180.93px;font-size:23px;color:#2a2a2a;font-weight:bold;transform:scaleX(0.9799);transform-origin:0 0;">Context Help</div>
<div class="a" style="left:2233px;top:217px;width:145px;height:67px;background:#eeeeee;"></div>
<div class="a" style="left:2233px;top:283px;width:145px;height:2px;background:#c2c2c2;"></div>
<svg class="a" style="left:2262px;top:240px" width="76" height="24" viewBox="0 0 76 24"><path d="M3 11 L19 2 V20 Z" fill="#d6d6d6" stroke="#c0c0c0" stroke-width="1"/><path d="M55 2 L71 11 L55 20 Z" fill="#d6d6d6" stroke="#c0c0c0" stroke-width="1"/></svg>
<div class="a" style="left:0px;top:218px;width:494px;height:96px;background:#ebebeb;"></div>
<div class="a" style="left:0px;top:314px;width:494px;height:1071px;background:#e9e5ea;"></div>
<div class="a" style="left:494px;top:167px;width:2px;height:1237px;background:#cfcfcf;"></div>
<div class="t" style="left:6.5px;top:229.78px;font-size:24px;color:#0c0c0c;font-weight:bold;transform:scaleX(0.8832);transform-origin:0 0;">SCHEMAS</div>
<svg class="a" style="left:436px;top:222px" width="40" height="34" viewBox="0 0 40 34"><path d="M9.9 14.4 L15.4 8 L20.5 14.4 L17 14.4 Q17.5 19.5 21.9 22.8 Q14 22.5 13.2 14.4 Z" fill="#8d96a2" stroke="#737c88" stroke-width="0.7" stroke-linejoin="round"/><path d="M19.3 7.1 Q27.5 8 28.2 15.3 L31.8 15.3 L26.1 21.6 L20.7 15.3 L24 15.3 Q23.5 9.5 19.3 7.1 Z" fill="#8d96a2" stroke="#737c88" stroke-width="0.7" stroke-linejoin="round"/></svg>
<div class="a" style="left:12px;top:268px;width:464px;height:39px;background:#ffffff;border-radius:8px;box-shadow:0 0 0 1px #d6d6d6,0 1px 1.5px rgba(0,0,0,0.25)"></div>
<svg class="a" style="left:24px;top:272px" width="32" height="32" viewBox="0 0 32 32"><circle cx="12.5" cy="12" r="9.3" fill="none" stroke="#1a1a1a" stroke-width="2.4"/><path d="M19 18.5 L26 25.5" stroke="#1a1a1a" stroke-width="3" stroke-linecap="round"/></svg>
<div class="t" style="left:67.3px;top:275.38px;font-size:23.3px;color:#b4b4b4;letter-spacing:0.148px;">Filter objects</div>
<svg class="a" style="left:26px;top:347px" width="14" height="20" viewBox="0 0 14 20"><path d="M3 2.5 L10 10 L3 17.5" fill="none" stroke="#6c6c6c" stroke-width="3"/></svg>
<svg class="a" style="left:51.5px;top:342px" width="25" height="30" viewBox="0 0 25 30"><path d="M1.5 5 V24 Q12.5 31 23.5 24 V5" fill="url(#gDbS)" stroke="#c4c4c4" stroke-width="1.2"/><path d="M1.5 12.5 Q12.5 18 23.5 12.5 M1.5 19 Q12.5 24.5 23.5 19" fill="none" stroke="#bdbdbd" stroke-width="1.3"/><ellipse cx="12.5" cy="5" rx="11" ry="4" fill="#ececec" stroke="#c4c4c4" stroke-width="1.2"/></svg>
<div class="t" style="left:90.7px;top:338.90px;font-size:26.7px;color:#141414;letter-spacing:0.025px;">mysqlBenchSft_db</div>
<svg class="a" style="left:26px;top:395px" width="14" height="20" viewBox="0 0 14 20"><path d="M3 2.5 L10 10 L3 17.5" fill="none" stroke="#6c6c6c" stroke-width="3"/></svg>
<svg class="a" style="left:51.5px;top:390px" width="25" height="30" viewBox="0 0 25 30"><path d="M1.5 5 V24 Q12.5 31 23.5 24 V5" fill="url(#gDbS)" stroke="#c4c4c4" stroke-width="1.2"/><path d="M1.5 12.5 Q12.5 18 23.5 12.5 M1.5 19 Q12.5 24.5 23.5 19" fill="none" stroke="#bdbdbd" stroke-width="1.3"/><ellipse cx="12.5" cy="5" rx="11" ry="4" fill="#ececec" stroke="#c4c4c4" stroke-width="1.2"/></svg>
<div class="t" style="left:90.7px;top:386.90px;font-size:26.7px;color:#141414;letter-spacing:-1.025px;">sys</div>
<div class="a" style="left:14px;top:430px;width:460px;height:48px;background:#70a8f6;border-radius:11px"></div>
<svg class="a" style="left:20px;top:448px" width="20" height="14" viewBox="0 0 20 14"><path d="M2 3 L9.5 10.5 L17 3" fill="none" stroke="#ffffff" stroke-width="3.4"/></svg>
<svg class="a" style="left:51.5px;top:438px" width="25" height="30" viewBox="0 0 25 30"><path d="M1.5 5 V24 Q12.5 31 23.5 24 V5" fill="url(#gDbS)" stroke="#c4c4c4" stroke-width="1.2"/><path d="M1.5 12.5 Q12.5 18 23.5 12.5 M1.5 19 Q12.5 24.5 23.5 19" fill="none" stroke="#bdbdbd" stroke-width="1.3"/><ellipse cx="12.5" cy="5" rx="11" ry="4" fill="#ececec" stroke="#c4c4c4" stroke-width="1.2"/></svg>
<svg class="a" style="left:0;top:0" width="2378" height="1444" shape-rendering="crispEdges"><rect x="86" y="424" width="9" height="9" fill="#7eb0f7"/><rect x="113" y="424" width="9" height="9" fill="#7eb0f7"/><rect x="122" y="424" width="9" height="9" fill="#d0e3fc"/><rect x="131" y="424" width="9" height="9" fill="#cee1fc"/><rect x="149" y="424" width="9" height="9" fill="#b4d1fa"/><rect x="86" y="433" width="9" height="9" fill="#eff5fe"/><rect x="95" y="433" width="9" height="9" fill="#72a9f6"/><rect x="113" y="433" width="9" height="9" fill="#89b7f7"/><rect x="122" y="433" width="9" height="9" fill="#9ec4f9"/><rect x="140" y="433" width="9" height="9" fill="#8bb8f7"/><rect x="149" y="433" width="9" height="9" fill="#b6d2fa"/><rect x="86" y="442" width="9" height="9" fill="#9dc3f9"/><rect x="95" y="442" width="9" height="9" fill="#dbe9fd"/><rect x="113" y="442" width="9" height="9" fill="#cee1fc"/><rect x="122" y="442" width="9" height="9" fill="#c3dafb"/><rect x="131" y="442" width="9" height="9" fill="#d5e6fd"/><rect x="140" y="442" width="9" height="9" fill="#88b7f7"/><rect x="149" y="442" width="9" height="9" fill="#8cb9f7"/><rect x="158" y="442" width="9" height="9" fill="#9bc2f9"/><rect x="86" y="451" width="9" height="9" fill="#a2c6f9"/><rect x="95" y="451" width="9" height="9" fill="#dbe9fd"/><rect x="131" y="451" width="9" height="9" fill="#97bff8"/><rect x="140" y="451" width="9" height="9" fill="#bfd8fb"/><rect x="149" y="451" width="9" height="9" fill="#c6dcfc"/><rect x="158" y="451" width="9" height="9" fill="#88b7f7"/><rect x="113" y="460" width="9" height="9" fill="#a3c7f9"/><rect x="149" y="460" width="9" height="9" fill="#aacbfa"/></svg>
<div class="t" style="left:166px;top:434.70px;font-size:26.7px;color:#ffffff;font-weight:bold;letter-spacing:-0.962px;">i_db</div>
<svg class="a" style="left:414px;top:440px" width="60" height="28" viewBox="0 0 60 28"><circle cx="13.8" cy="14" r="12" fill="#6b8fc5"/><path d="M14.5 10.8 L12.6 20.5" stroke="#a9c8f2" stroke-width="2.8" stroke-linecap="round"/><circle cx="15.1" cy="7.4" r="1.6" fill="#a9c8f2"/><circle cx="45.9" cy="14" r="12" fill="#6b8fc5"/><path d="M43 11.5 L51.5 19.5" stroke="#b0ccf4" stroke-width="3" stroke-linecap="round"/><path d="M38.5 10 A4.6 4.6 0 1 0 44.5 5.8 L42.8 9.2 L40.8 8.2 Z" fill="#b0ccf4"/></svg>
<svg class="a" style="left:46px;top:495px" width="20" height="14" viewBox="0 0 20 14"><path d="M2 3 L9.5 10.5 L17 3" fill="none" stroke="#6c6c6c" stroke-width="3"/></svg>
<svg class="a" style="left:73px;top:485px" width="34" height="30" viewBox="0 0 34 30"><rect x="1.5" y="1.5" width="17" height="16" fill="#d9dde2" stroke="#8d99a6" stroke-width="1.4"/><rect x="7.5" y="6.5" width="17" height="16" fill="#d9dde2" stroke="#8d99a6" stroke-width="1.4"/><rect x="13.5" y="11.5" width="17" height="16" fill="#d9dde2" stroke="#8d99a6" stroke-width="1.4"/><path d="M17.75 11.5 V27.5 M13.5 15.5 H30.5" stroke="#a3aeba" stroke-width="0.8"/><path d="M17.75 11.5 V27.5 M13.5 19.5 H30.5" stroke="#a3aeba" stroke-width="0.8"/><path d="M17.75 11.5 V27.5 M13.5 23.5 H30.5" stroke="#a3aeba" stroke-width="0.8"/><path d="M22.0 11.5 V27.5 M13.5 15.5 H30.5" stroke="#a3aeba" stroke-width="0.8"/><path d="M22.0 11.5 V27.5 M13.5 19.5 H30.5" stroke="#a3aeba" stroke-width="0.8"/><path d="M22.0 11.5 V27.5 M13.5 23.5 H30.5" stroke="#a3aeba" stroke-width="0.8"/><path d="M26.25 11.5 V27.5 M13.5 15.5 H30.5" stroke="#a3aeba" stroke-width="0.8"/><path d="M26.25 11.5 V27.5 M13.5 19.5 H30.5" stroke="#a3aeba" stroke-width="0.8"/><path d="M26.25 11.5 V27.5 M13.5 23.5 H30.5" stroke="#a3aeba" stroke-width="0.8"/><rect x="13" y="11" width="18" height="2.5" fill="#8d99a6"/></svg>
<div class="t" style="left:117px;top:483.20px;font-size:26.7px;color:#141414;letter-spacing:-0.236px;">Tables</div>
<svg class="a" style="left:0;top:0" width="2378" height="1444" shape-rendering="crispEdges"><rect x="150" y="494" width="9" height="9" fill="#cdcdcd"/><rect x="159" y="494" width="9" height="9" fill="#989898"/><rect x="177" y="494" width="9" height="9" fill="#8b8b8b"/><rect x="186" y="494" width="9" height="9" fill="#cdcdcd"/><rect x="150" y="503" width="9" height="9" fill="#828282"/><rect x="159" y="503" width="9" height="9" fill="#8b8b8b"/><rect x="168" y="503" width="9" height="9" fill="#b6b6b6"/><rect x="177" y="503" width="9" height="9" fill="#d4d4d4"/><rect x="186" y="503" width="9" height="9" fill="#b5b5b5"/></svg>
<svg class="a" style="left:78px;top:539px" width="14" height="20" viewBox="0 0 14 20"><path d="M3 2.5 L10 10 L3 17.5" fill="none" stroke="#6c6c6c" stroke-width="3"/></svg>
<svg class="a" style="left:101px;top:534px" width="28" height="29" viewBox="0 0 28 29"><rect x="1" y="1" width="25.5" height="26.5" fill="#dde2e7" stroke="#8e9aa6" stroke-width="1.6"/><rect x="1" y="1" width="25.5" height="3" fill="#8e9aa6"/><rect x="4.5" y="7" width="8" height="2.2" fill="#9eabb8"/><rect x="14" y="7" width="9" height="2.2" fill="#9eabb8"/><rect x="4.5" y="11" width="8" height="2.2" fill="#9eabb8"/><rect x="14" y="11" width="9" height="2.2" fill="#9eabb8"/><rect x="4.5" y="15" width="8" height="2.2" fill="#9eabb8"/><rect x="14" y="15" width="9" height="2.2" fill="#9eabb8"/><rect x="4.5" y="19" width="8" height="2.2" fill="#9eabb8"/><rect x="14" y="19" width="9" height="2.2" fill="#9eabb8"/><rect x="4.5" y="23" width="8" height="2.2" fill="#9eabb8"/><rect x="14" y="23" width="9" height="2.2" fill="#9eabb8"/><rect x="1" y="27.8" width="26" height="1.2" fill="#ffffff"/></svg>
<div class="t" style="left:142.5px;top:533.40px;font-size:26.7px;color:#141414;">a</div>
<svg class="a" style="left:0;top:0" width="2378" height="1444" shape-rendering="crispEdges"><rect x="150" y="529" width="9" height="9" fill="#a5a5a5"/><rect x="213" y="529" width="9" height="9" fill="#a5a5a5"/><rect x="150" y="538" width="9" height="9" fill="#d9d9d9"/><rect x="168" y="538" width="9" height="9" fill="#929292"/><rect x="177" y="538" width="9" height="9" fill="#848484"/><rect x="186" y="538" width="9" height="9" fill="#818181"/><rect x="195" y="538" width="9" height="9" fill="#b8b8b8"/><rect x="213" y="538" width="9" height="9" fill="#dbdbdb"/><rect x="150" y="547" width="9" height="9" fill="#d6d6d6"/><rect x="159" y="547" width="9" height="9" fill="#7d7d7d"/><rect x="168" y="547" width="9" height="9" fill="#777777"/><rect x="177" y="547" width="9" height="9" fill="#9d9d9d"/><rect x="186" y="547" width="9" height="9" fill="#b2b2b2"/><rect x="195" y="547" width="9" height="9" fill="#cfcfcf"/><rect x="213" y="547" width="9" height="9" fill="#a4a4a4"/><rect x="168" y="556" width="9" height="9" fill="#b0b0b0"/></svg>
<svg class="a" style="left:78px;top:587px" width="14" height="20" viewBox="0 0 14 20"><path d="M3 2.5 L10 10 L3 17.5" fill="none" stroke="#6c6c6c" stroke-width="3"/></svg>
<svg class="a" style="left:101px;top:582px" width="28" height="29" viewBox="0 0 28 29"><rect x="1" y="1" width="25.5" height="26.5" fill="#dde2e7" stroke="#8e9aa6" stroke-width="1.6"/><rect x="1" y="1" width="25.5" height="3" fill="#8e9aa6"/><rect x="4.5" y="7" width="8" height="2.2" fill="#9eabb8"/><rect x="14" y="7" width="9" height="2.2" fill="#9eabb8"/><rect x="4.5" y="11" width="8" height="2.2" fill="#9eabb8"/><rect x="14" y="11" width="9" height="2.2" fill="#9eabb8"/><rect x="4.5" y="15" width="8" height="2.2" fill="#9eabb8"/><rect x="14" y="15" width="9" height="2.2" fill="#9eabb8"/><rect x="4.5" y="19" width="8" height="2.2" fill="#9eabb8"/><rect x="14" y="19" width="9" height="2.2" fill="#9eabb8"/><rect x="4.5" y="23" width="8" height="2.2" fill="#9eabb8"/><rect x="14" y="23" width="9" height="2.2" fill="#9eabb8"/><rect x="1" y="27.8" width="26" height="1.2" fill="#ffffff"/></svg>
<div class="t" style="left:142.5px;top:581.40px;font-size:26.7px;color:#141414;">a</div>
<svg class="a" style="left:0;top:0" width="2378" height="1444" shape-rendering="crispEdges"><rect x="150" y="583" width="9" height="9" fill="#828282"/><rect x="177" y="583" width="9" height="9" fill="#bdbdbd"/><rect x="186" y="583" width="9" height="9" fill="#868686"/><rect x="195" y="583" width="9" height="9" fill="#c0c0c0"/><rect x="204" y="583" width="9" height="9" fill="#dddddd"/><rect x="213" y="583" width="9" height="9" fill="#828282"/><rect x="222" y="583" width="9" height="9" fill="#c8c8c8"/><rect x="231" y="583" width="9" height="9" fill="#a7a7a7"/><rect x="240" y="583" width="9" height="9" fill="#bababa"/><rect x="249" y="583" width="9" height="9" fill="#848484"/><rect x="258" y="583" width="9" height="9" fill="#929292"/><rect x="267" y="583" width="9" height="9" fill="#cecece"/><rect x="276" y="583" width="9" height="9" fill="#bdbdbd"/><rect x="285" y="583" width="9" height="9" fill="#9d9d9d"/><rect x="294" y="583" width="9" height="9" fill="#a1a1a1"/><rect x="303" y="583" width="9" height="9" fill="#bdbdbd"/><rect x="312" y="583" width="9" height="9" fill="#a6a6a6"/><rect x="321" y="583" width="9" height="9" fill="#979797"/><rect x="330" y="583" width="9" height="9" fill="#c1c1c1"/><rect x="150" y="592" width="9" height="9" fill="#b1b1b1"/><rect x="159" y="592" width="9" height="9" fill="#666666"/><rect x="168" y="592" width="9" height="9" fill="#6d6d6d"/><rect x="177" y="592" width="9" height="9" fill="#bfbfbf"/><rect x="186" y="592" width="9" height="9" fill="#999999"/><rect x="195" y="592" width="9" height="9" fill="#a7a7a7"/><rect x="204" y="592" width="9" height="9" fill="#d3d3d3"/><rect x="213" y="592" width="9" height="9" fill="#d2d2d2"/><rect x="222" y="592" width="9" height="9" fill="#bfbfbf"/><rect x="231" y="592" width="9" height="9" fill="#707070"/><rect x="240" y="592" width="9" height="9" fill="#979797"/><rect x="258" y="592" width="9" height="9" fill="#cfcfcf"/><rect x="267" y="592" width="9" height="9" fill="#c1c1c1"/><rect x="276" y="592" width="9" height="9" fill="#cccccc"/><rect x="285" y="592" width="9" height="9" fill="#7a7a7a"/><rect x="294" y="592" width="9" height="9" fill="#cacaca"/><rect x="303" y="592" width="9" height="9" fill="#d5d5d5"/><rect x="312" y="592" width="9" height="9" fill="#d4d4d4"/><rect x="321" y="592" width="9" height="9" fill="#dbdbdb"/><rect x="330" y="592" width="9" height="9" fill="#969696"/><rect x="150" y="601" width="9" height="9" fill="#b0b0b0"/><rect x="177" y="601" width="9" height="9" fill="#8e8e8e"/><rect x="195" y="601" width="9" height="9" fill="#d9d9d9"/><rect x="222" y="601" width="9" height="9" fill="#dedede"/><rect x="249" y="601" width="9" height="9" fill="#bbbbbb"/><rect x="267" y="601" width="9" height="9" fill="#b9b9b9"/></svg>
<svg class="a" style="left:78px;top:635px" width="14" height="20" viewBox="0 0 14 20"><path d="M3 2.5 L10 10 L3 17.5" fill="none" stroke="#6c6c6c" stroke-width="3"/></svg>
<svg class="a" style="left:101px;top:630px" width="28" height="29" viewBox="0 0 28 29"><rect x="1" y="1" width="25.5" height="26.5" fill="#dde2e7" stroke="#8e9aa6" stroke-width="1.6"/><rect x="1" y="1" width="25.5" height="3" fill="#8e9aa6"/><rect x="4.5" y="7" width="8" height="2.2" fill="#9eabb8"/><rect x="14" y="7" width="9" height="2.2" fill="#9eabb8"/><rect x="4.5" y="11" width="8" height="2.2" fill="#9eabb8"/><rect x="14" y="11" width="9" height="2.2" fill="#9eabb8"/><rect x="4.5" y="15" width="8" height="2.2" fill="#9eabb8"/><rect x="14" y="15" width="9" height="2.2" fill="#9eabb8"/><rect x="4.5" y="19" width="8" height="2.2" fill="#9eabb8"/><rect x="14" y="19" width="9" height="2.2" fill="#9eabb8"/><rect x="4.5" y="23" width="8" height="2.2" fill="#9eabb8"/><rect x="14" y="23" width="9" height="2.2" fill="#9eabb8"/><rect x="1" y="27.8" width="26" height="1.2" fill="#ffffff"/></svg>
<div class="t" style="left:142.5px;top:629.40px;font-size:26.7px;color:#141414;">a</div>
<svg class="a" style="left:0;top:0" width="2378" height="1444" shape-rendering="crispEdges"><rect x="150" y="628" width="9" height="9" fill="#b7b7b7"/><rect x="159" y="628" width="9" height="9" fill="#c2c2c2"/><rect x="177" y="628" width="9" height="9" fill="#b7b7b7"/><rect x="186" y="628" width="9" height="9" fill="#686868"/><rect x="195" y="628" width="9" height="9" fill="#b8b8b8"/><rect x="204" y="628" width="9" height="9" fill="#d3d3d3"/><rect x="222" y="628" width="9" height="9" fill="#878787"/><rect x="231" y="628" width="9" height="9" fill="#cccccc"/><rect x="258" y="628" width="9" height="9" fill="#aaaaaa"/><rect x="267" y="628" width="9" height="9" fill="#aeaeae"/><rect x="276" y="628" width="9" height="9" fill="#b8b8b8"/><rect x="303" y="628" width="9" height="9" fill="#727272"/><rect x="312" y="628" width="9" height="9" fill="#bfbfbf"/><rect x="321" y="628" width="9" height="9" fill="#c6c6c6"/><rect x="330" y="628" width="9" height="9" fill="#9e9e9e"/><rect x="150" y="637" width="9" height="9" fill="#848484"/><rect x="159" y="637" width="9" height="9" fill="#b9b9b9"/><rect x="168" y="637" width="9" height="9" fill="#b1b1b1"/><rect x="177" y="637" width="9" height="9" fill="#bdbdbd"/><rect x="186" y="637" width="9" height="9" fill="#cecece"/><rect x="195" y="637" width="9" height="9" fill="#a6a6a6"/><rect x="213" y="637" width="9" height="9" fill="#b8b8b8"/><rect x="222" y="637" width="9" height="9" fill="#bfbfbf"/><rect x="231" y="637" width="9" height="9" fill="#c5c5c5"/><rect x="240" y="637" width="9" height="9" fill="#d7d7d7"/><rect x="249" y="637" width="9" height="9" fill="#aeaeae"/><rect x="267" y="637" width="9" height="9" fill="#9e9e9e"/><rect x="294" y="637" width="9" height="9" fill="#6e6e6e"/><rect x="303" y="637" width="9" height="9" fill="#d4d4d4"/><rect x="312" y="637" width="9" height="9" fill="#8b8b8b"/><rect x="321" y="637" width="9" height="9" fill="#dadada"/><rect x="330" y="637" width="9" height="9" fill="#a4a4a4"/><rect x="339" y="637" width="9" height="9" fill="#868686"/><rect x="150" y="646" width="9" height="9" fill="#7a7a7a"/><rect x="159" y="646" width="9" height="9" fill="#878787"/><rect x="168" y="646" width="9" height="9" fill="#9d9d9d"/><rect x="177" y="646" width="9" height="9" fill="#767676"/><rect x="186" y="646" width="9" height="9" fill="#a0a0a0"/><rect x="195" y="646" width="9" height="9" fill="#c4c4c4"/><rect x="204" y="646" width="9" height="9" fill="#898989"/><rect x="213" y="646" width="9" height="9" fill="#919191"/><rect x="231" y="646" width="9" height="9" fill="#a6a6a6"/><rect x="258" y="646" width="9" height="9" fill="#d0d0d0"/><rect x="276" y="646" width="9" height="9" fill="#727272"/><rect x="285" y="646" width="9" height="9" fill="#cacaca"/><rect x="294" y="646" width="9" height="9" fill="#cfcfcf"/><rect x="321" y="646" width="9" height="9" fill="#5f5f5f"/><rect x="330" y="646" width="9" height="9" fill="#868686"/></svg>
<svg class="a" style="left:78px;top:683px" width="14" height="20" viewBox="0 0 14 20"><path d="M3 2.5 L10 10 L3 17.5" fill="none" stroke="#6c6c6c" stroke-width="3"/></svg>
<svg class="a" style="left:101px;top:678px" width="28" height="29" viewBox="0 0 28 29"><rect x="1" y="1" width="25.5" height="26.5" fill="#dde2e7" stroke="#8e9aa6" stroke-width="1.6"/><rect x="1" y="1" width="25.5" height="3" fill="#8e9aa6"/><rect x="4.5" y="7" width="8" height="2.2" fill="#9eabb8"/><rect x="14" y="7" width="9" height="2.2" fill="#9eabb8"/><rect x="4.5" y="11" width="8" height="2.2" fill="#9eabb8"/><rect x="14" y="11" width="9" height="2.2" fill="#9eabb8"/><rect x="4.5" y="15" width="8" height="2.2" fill="#9eabb8"/><rect x="14" y="15" width="9" height="2.2" fill="#9eabb8"/><rect x="4.5" y="19" width="8" height="2.2" fill="#9eabb8"/><rect x="14" y="19" width="9" height="2.2" fill="#9eabb8"/><rect x="4.5" y="23" width="8" height="2.2" fill="#9eabb8"/><rect x="14" y="23" width="9" height="2.2" fill="#9eabb8"/><rect x="1" y="27.8" width="26" height="1.2" fill="#ffffff"/></svg>
<div class="t" style="left:142.5px;top:677.40px;font-size:26.7px;color:#141414;">a</div>
<svg class="a" style="left:0;top:0" width="2378" height="1444" shape-rendering="crispEdges"><rect x="186" y="673" width="9" height="9" fill="#6f6f6f"/><rect x="204" y="673" width="9" height="9" fill="#9c9c9c"/><rect x="231" y="673" width="9" height="9" fill="#707070"/><rect x="240" y="673" width="9" height="9" fill="#cecece"/><rect x="249" y="673" width="9" height="9" fill="#878787"/><rect x="258" y="673" width="9" height="9" fill="#787878"/><rect x="276" y="673" width="9" height="9" fill="#9f9f9f"/><rect x="339" y="673" width="9" height="9" fill="#9a9a9a"/><rect x="384" y="673" width="9" height="9" fill="#8e8e8e"/><rect x="393" y="673" width="9" height="9" fill="#dedede"/><rect x="150" y="682" width="9" height="9" fill="#919191"/><rect x="159" y="682" width="9" height="9" fill="#7b7b7b"/><rect x="168" y="682" width="9" height="9" fill="#8b8b8b"/><rect x="177" y="682" width="9" height="9" fill="#d7d7d7"/><rect x="186" y="682" width="9" height="9" fill="#cdcdcd"/><rect x="195" y="682" width="9" height="9" fill="#717171"/><rect x="204" y="682" width="9" height="9" fill="#dfdfdf"/><rect x="222" y="682" width="9" height="9" fill="#c8c8c8"/><rect x="231" y="682" width="9" height="9" fill="#909090"/><rect x="240" y="682" width="9" height="9" fill="#b5b5b5"/><rect x="249" y="682" width="9" height="9" fill="#cdcdcd"/><rect x="258" y="682" width="9" height="9" fill="#c6c6c6"/><rect x="267" y="682" width="9" height="9" fill="#a3a3a3"/><rect x="276" y="682" width="9" height="9" fill="#bbbbbb"/><rect x="285" y="682" width="9" height="9" fill="#afafaf"/><rect x="294" y="682" width="9" height="9" fill="#b8b8b8"/><rect x="303" y="682" width="9" height="9" fill="#9c9c9c"/><rect x="312" y="682" width="9" height="9" fill="#bbbbbb"/><rect x="321" y="682" width="9" height="9" fill="#a7a7a7"/><rect x="330" y="682" width="9" height="9" fill="#b0b0b0"/><rect x="339" y="682" width="9" height="9" fill="#959595"/><rect x="348" y="682" width="9" height="9" fill="#d0d0d0"/><rect x="357" y="682" width="9" height="9" fill="#dedede"/><rect x="366" y="682" width="9" height="9" fill="#d7d7d7"/><rect x="375" y="682" width="9" height="9" fill="#999999"/><rect x="384" y="682" width="9" height="9" fill="#666666"/><rect x="393" y="682" width="9" height="9" fill="#d3d3d3"/><rect x="411" y="682" width="9" height="9" fill="#979797"/><rect x="420" y="682" width="9" height="9" fill="#b9b9b9"/><rect x="150" y="691" width="9" height="9" fill="#656565"/><rect x="159" y="691" width="9" height="9" fill="#b8b8b8"/><rect x="168" y="691" width="9" height="9" fill="#a1a1a1"/><rect x="177" y="691" width="9" height="9" fill="#d2d2d2"/><rect x="186" y="691" width="9" height="9" fill="#c3c3c3"/><rect x="195" y="691" width="9" height="9" fill="#939393"/><rect x="204" y="691" width="9" height="9" fill="#acacac"/><rect x="213" y="691" width="9" height="9" fill="#b5b5b5"/><rect x="222" y="691" width="9" height="9" fill="#cbcbcb"/><rect x="231" y="691" width="9" height="9" fill="#797979"/><rect x="240" y="691" width="9" height="9" fill="#d5d5d5"/><rect x="249" y="691" width="9" height="9" fill="#afafaf"/><rect x="258" y="691" width="9" height="9" fill="#d9d9d9"/><rect x="267" y="691" width="9" height="9" fill="#a9a9a9"/><rect x="276" y="691" width="9" height="9" fill="#959595"/><rect x="285" y="691" width="9" height="9" fill="#a5a5a5"/><rect x="294" y="691" width="9" height="9" fill="#d1d1d1"/><rect x="303" y="691" width="9" height="9" fill="#606060"/><rect x="321" y="691" width="9" height="9" fill="#b0b0b0"/><rect x="330" y="691" width="9" height="9" fill="#6a6a6a"/><rect x="348" y="691" width="9" height="9" fill="#d1d1d1"/><rect x="357" y="691" width="9" height="9" fill="#c6c6c6"/><rect x="366" y="691" width="9" height="9" fill="#8b8b8b"/><rect x="375" y="691" width="9" height="9" fill="#a2a2a2"/><rect x="384" y="691" width="9" height="9" fill="#cbcbcb"/><rect x="393" y="691" width="9" height="9" fill="#b3b3b3"/><rect x="402" y="691" width="9" height="9" fill="#828282"/><rect x="411" y="691" width="9" height="9" fill="#bbbbbb"/><rect x="420" y="691" width="9" height="9" fill="#c3c3c3"/><rect x="168" y="700" width="9" height="9" fill="#8f8f8f"/><rect x="231" y="700" width="9" height="9" fill="#8e8e8e"/><rect x="240" y="700" width="9" height="9" fill="#cacaca"/><rect x="312" y="700" width="9" height="9" fill="#bbbbbb"/><rect x="393" y="700" width="9" height="9" fill="#9e9e9e"/><rect x="402" y="700" width="9" height="9" fill="#bdbdbd"/></svg>
<svg class="a" style="left:78px;top:731px" width="14" height="20" viewBox="0 0 14 20"><path d="M3 2.5 L10 10 L3 17.5" fill="none" stroke="#6c6c6c" stroke-width="3"/></svg>
<svg class="a" style="left:101px;top:726px" width="28" height="29" viewBox="0 0 28 29"><rect x="1" y="1" width="25.5" height="26.5" fill="#dde2e7" stroke="#8e9aa6" stroke-width="1.6"/><rect x="1" y="1" width="25.5" height="3" fill="#8e9aa6"/><rect x="4.5" y="7" width="8" height="2.2" fill="#9eabb8"/><rect x="14" y="7" width="9" height="2.2" fill="#9eabb8"/><rect x="4.5" y="11" width="8" height="2.2" fill="#9eabb8"/><rect x="14" y="11" width="9" height="2.2" fill="#9eabb8"/><rect x="4.5" y="15" width="8" height="2.2" fill="#9eabb8"/><rect x="14" y="15" width="9" height="2.2" fill="#9eabb8"/><rect x="4.5" y="19" width="8" height="2.2" fill="#9eabb8"/><rect x="14" y="19" width="9" height="2.2" fill="#9eabb8"/><rect x="4.5" y="23" width="8" height="2.2" fill="#9eabb8"/><rect x="14" y="23" width="9" height="2.2" fill="#9eabb8"/><rect x="1" y="27.8" width="26" height="1.2" fill="#ffffff"/></svg>
<div class="t" style="left:142.5px;top:725.40px;font-size:26.7px;color:#141414;">a</div>
<svg class="a" style="left:0;top:0" width="2378" height="1444" shape-rendering="crispEdges"><rect x="159" y="727" width="9" height="9" fill="#c4c4c4"/><rect x="168" y="727" width="9" height="9" fill="#959595"/><rect x="177" y="727" width="9" height="9" fill="#cccccc"/><rect x="186" y="727" width="9" height="9" fill="#7e7e7e"/><rect x="195" y="727" width="9" height="9" fill="#767676"/><rect x="204" y="727" width="9" height="9" fill="#959595"/><rect x="213" y="727" width="9" height="9" fill="#d2d2d2"/><rect x="222" y="727" width="9" height="9" fill="#9d9d9d"/><rect x="231" y="727" width="9" height="9" fill="#b8b8b8"/><rect x="240" y="727" width="9" height="9" fill="#9f9f9f"/><rect x="249" y="727" width="9" height="9" fill="#aeaeae"/><rect x="258" y="727" width="9" height="9" fill="#808080"/><rect x="267" y="727" width="9" height="9" fill="#737373"/><rect x="276" y="727" width="9" height="9" fill="#cbcbcb"/><rect x="285" y="727" width="9" height="9" fill="#8a8a8a"/><rect x="294" y="727" width="9" height="9" fill="#d8d8d8"/><rect x="303" y="727" width="9" height="9" fill="#dfdfdf"/><rect x="312" y="727" width="9" height="9" fill="#cfcfcf"/><rect x="321" y="727" width="9" height="9" fill="#bdbdbd"/><rect x="330" y="727" width="9" height="9" fill="#b0b0b0"/><rect x="339" y="727" width="9" height="9" fill="#d7d7d7"/><rect x="357" y="727" width="9" height="9" fill="#adadad"/><rect x="366" y="727" width="9" height="9" fill="#9b9b9b"/><rect x="375" y="727" width="9" height="9" fill="#7d7d7d"/><rect x="384" y="727" width="9" height="9" fill="#707070"/><rect x="393" y="727" width="9" height="9" fill="#606060"/><rect x="402" y="727" width="9" height="9" fill="#898989"/><rect x="411" y="727" width="9" height="9" fill="#b8b8b8"/><rect x="420" y="727" width="9" height="9" fill="#b9b9b9"/><rect x="150" y="736" width="9" height="9" fill="#aeaeae"/><rect x="159" y="736" width="9" height="9" fill="#929292"/><rect x="168" y="736" width="9" height="9" fill="#c0c0c0"/><rect x="177" y="736" width="9" height="9" fill="#d5d5d5"/><rect x="186" y="736" width="9" height="9" fill="#acacac"/><rect x="195" y="736" width="9" height="9" fill="#c4c4c4"/><rect x="204" y="736" width="9" height="9" fill="#656565"/><rect x="222" y="736" width="9" height="9" fill="#a8a8a8"/><rect x="231" y="736" width="9" height="9" fill="#727272"/><rect x="240" y="736" width="9" height="9" fill="#b4b4b4"/><rect x="249" y="736" width="9" height="9" fill="#b7b7b7"/><rect x="258" y="736" width="9" height="9" fill="#b2b2b2"/><rect x="276" y="736" width="9" height="9" fill="#d0d0d0"/><rect x="285" y="736" width="9" height="9" fill="#bfbfbf"/><rect x="294" y="736" width="9" height="9" fill="#7d7d7d"/><rect x="303" y="736" width="9" height="9" fill="#808080"/><rect x="312" y="736" width="9" height="9" fill="#858585"/><rect x="321" y="736" width="9" height="9" fill="#8a8a8a"/><rect x="330" y="736" width="9" height="9" fill="#707070"/><rect x="339" y="736" width="9" height="9" fill="#6a6a6a"/><rect x="348" y="736" width="9" height="9" fill="#878787"/><rect x="357" y="736" width="9" height="9" fill="#888888"/><rect x="366" y="736" width="9" height="9" fill="#a9a9a9"/><rect x="375" y="736" width="9" height="9" fill="#d4d4d4"/><rect x="384" y="736" width="9" height="9" fill="#9d9d9d"/><rect x="393" y="736" width="9" height="9" fill="#dadada"/><rect x="402" y="736" width="9" height="9" fill="#9d9d9d"/><rect x="411" y="736" width="9" height="9" fill="#9b9b9b"/><rect x="420" y="736" width="9" height="9" fill="#b7b7b7"/><rect x="168" y="745" width="9" height="9" fill="#989898"/><rect x="204" y="745" width="9" height="9" fill="#b1b1b1"/><rect x="222" y="745" width="9" height="9" fill="#979797"/><rect x="240" y="745" width="9" height="9" fill="#808080"/><rect x="249" y="745" width="9" height="9" fill="#cbcbcb"/><rect x="285" y="745" width="9" height="9" fill="#a3a3a3"/><rect x="294" y="745" width="9" height="9" fill="#cbcbcb"/><rect x="339" y="745" width="9" height="9" fill="#727272"/></svg>
<svg class="a" style="left:78px;top:779px" width="14" height="20" viewBox="0 0 14 20"><path d="M3 2.5 L10 10 L3 17.5" fill="none" stroke="#6c6c6c" stroke-width="3"/></svg>
<svg class="a" style="left:101px;top:774px" width="28" height="29" viewBox="0 0 28 29"><rect x="1" y="1" width="25.5" height="26.5" fill="#dde2e7" stroke="#8e9aa6" stroke-width="1.6"/><rect x="1" y="1" width="25.5" height="3" fill="#8e9aa6"/><rect x="4.5" y="7" width="8" height="2.2" fill="#9eabb8"/><rect x="14" y="7" width="9" height="2.2" fill="#9eabb8"/><rect x="4.5" y="11" width="8" height="2.2" fill="#9eabb8"/><rect x="14" y="11" width="9" height="2.2" fill="#9eabb8"/><rect x="4.5" y="15" width="8" height="2.2" fill="#9eabb8"/><rect x="14" y="15" width="9" height="2.2" fill="#9eabb8"/><rect x="4.5" y="19" width="8" height="2.2" fill="#9eabb8"/><rect x="14" y="19" width="9" height="2.2" fill="#9eabb8"/><rect x="4.5" y="23" width="8" height="2.2" fill="#9eabb8"/><rect x="14" y="23" width="9" height="2.2" fill="#9eabb8"/><rect x="1" y="27.8" width="26" height="1.2" fill="#ffffff"/></svg>
<div class="t" style="left:142.5px;top:773.40px;font-size:26.7px;color:#141414;">a</div>
<svg class="a" style="left:0;top:0" width="2378" height="1444" shape-rendering="crispEdges"><rect x="159" y="772" width="9" height="9" fill="#cacaca"/><rect x="177" y="772" width="9" height="9" fill="#c8c8c8"/><rect x="186" y="772" width="9" height="9" fill="#7d7d7d"/><rect x="195" y="772" width="9" height="9" fill="#c6c6c6"/><rect x="204" y="772" width="9" height="9" fill="#bcbcbc"/><rect x="213" y="772" width="9" height="9" fill="#7e7e7e"/><rect x="222" y="772" width="9" height="9" fill="#9c9c9c"/><rect x="231" y="772" width="9" height="9" fill="#d4d4d4"/><rect x="249" y="772" width="9" height="9" fill="#dedede"/><rect x="285" y="772" width="9" height="9" fill="#8a8a8a"/><rect x="150" y="781" width="9" height="9" fill="#767676"/><rect x="159" y="781" width="9" height="9" fill="#c8c8c8"/><rect x="168" y="781" width="9" height="9" fill="#dddddd"/><rect x="186" y="781" width="9" height="9" fill="#9d9d9d"/><rect x="195" y="781" width="9" height="9" fill="#ababab"/><rect x="204" y="781" width="9" height="9" fill="#b8b8b8"/><rect x="213" y="781" width="9" height="9" fill="#acacac"/><rect x="222" y="781" width="9" height="9" fill="#dcdcdc"/><rect x="231" y="781" width="9" height="9" fill="#d9d9d9"/><rect x="240" y="781" width="9" height="9" fill="#777777"/><rect x="249" y="781" width="9" height="9" fill="#909090"/><rect x="258" y="781" width="9" height="9" fill="#787878"/><rect x="267" y="781" width="9" height="9" fill="#a8a8a8"/><rect x="276" y="781" width="9" height="9" fill="#d2d2d2"/><rect x="294" y="781" width="9" height="9" fill="#616161"/><rect x="303" y="781" width="9" height="9" fill="#6b6b6b"/><rect x="159" y="790" width="9" height="9" fill="#c3c3c3"/><rect x="168" y="790" width="9" height="9" fill="#b4b4b4"/><rect x="195" y="790" width="9" height="9" fill="#b9b9b9"/><rect x="204" y="790" width="9" height="9" fill="#dddddd"/><rect x="213" y="790" width="9" height="9" fill="#898989"/><rect x="231" y="790" width="9" height="9" fill="#707070"/><rect x="258" y="790" width="9" height="9" fill="#7e7e7e"/><rect x="276" y="790" width="9" height="9" fill="#8a8a8a"/><rect x="285" y="790" width="9" height="9" fill="#d4d4d4"/><rect x="294" y="790" width="9" height="9" fill="#767676"/><rect x="303" y="790" width="9" height="9" fill="#c1c1c1"/></svg>
<svg class="a" style="left:78px;top:827px" width="14" height="20" viewBox="0 0 14 20"><path d="M3 2.5 L10 10 L3 17.5" fill="none" stroke="#6c6c6c" stroke-width="3"/></svg>
<svg class="a" style="left:101px;top:822px" width="28" height="29" viewBox="0 0 28 29"><rect x="1" y="1" width="25.5" height="26.5" fill="#dde2e7" stroke="#8e9aa6" stroke-width="1.6"/><rect x="1" y="1" width="25.5" height="3" fill="#8e9aa6"/><rect x="4.5" y="7" width="8" height="2.2" fill="#9eabb8"/><rect x="14" y="7" width="9" height="2.2" fill="#9eabb8"/><rect x="4.5" y="11" width="8" height="2.2" fill="#9eabb8"/><rect x="14" y="11" width="9" height="2.2" fill="#9eabb8"/><rect x="4.5" y="15" width="8" height="2.2" fill="#9eabb8"/><rect x="14" y="15" width="9" height="2.2" fill="#9eabb8"/><rect x="4.5" y="19" width="8" height="2.2" fill="#9eabb8"/><rect x="14" y="19" width="9" height="2.2" fill="#9eabb8"/><rect x="4.5" y="23" width="8" height="2.2" fill="#9eabb8"/><rect x="14" y="23" width="9" height="2.2" fill="#9eabb8"/><rect x="1" y="27.8" width="26" height="1.2" fill="#ffffff"/></svg>
<div class="t" style="left:142.5px;top:821.40px;font-size:26.7px;color:#141414;">a</div>
<svg class="a" style="left:0;top:0" width="2378" height="1444" shape-rendering="crispEdges"><rect x="168" y="817" width="9" height="9" fill="#dadada"/><rect x="186" y="817" width="9" height="9" fill="#cccccc"/><rect x="204" y="817" width="9" height="9" fill="#dddddd"/><rect x="258" y="817" width="9" height="9" fill="#a8a8a8"/><rect x="267" y="817" width="9" height="9" fill="#8e8e8e"/><rect x="285" y="817" width="9" height="9" fill="#979797"/><rect x="303" y="817" width="9" height="9" fill="#a2a2a2"/><rect x="312" y="817" width="9" height="9" fill="#c5c5c5"/><rect x="321" y="817" width="9" height="9" fill="#808080"/><rect x="384" y="817" width="9" height="9" fill="#7a7a7a"/><rect x="150" y="826" width="9" height="9" fill="#898989"/><rect x="159" y="826" width="9" height="9" fill="#d5d5d5"/><rect x="168" y="826" width="9" height="9" fill="#787878"/><rect x="177" y="826" width="9" height="9" fill="#787878"/><rect x="186" y="826" width="9" height="9" fill="#dbdbdb"/><rect x="195" y="826" width="9" height="9" fill="#dbdbdb"/><rect x="204" y="826" width="9" height="9" fill="#a4a4a4"/><rect x="213" y="826" width="9" height="9" fill="#bbbbbb"/><rect x="222" y="826" width="9" height="9" fill="#adadad"/><rect x="231" y="826" width="9" height="9" fill="#bdbdbd"/><rect x="240" y="826" width="9" height="9" fill="#bcbcbc"/><rect x="249" y="826" width="9" height="9" fill="#b5b5b5"/><rect x="258" y="826" width="9" height="9" fill="#aeaeae"/><rect x="267" y="826" width="9" height="9" fill="#727272"/><rect x="276" y="826" width="9" height="9" fill="#c2c2c2"/><rect x="285" y="826" width="9" height="9" fill="#c4c4c4"/><rect x="294" y="826" width="9" height="9" fill="#cecece"/><rect x="303" y="826" width="9" height="9" fill="#cecece"/><rect x="312" y="826" width="9" height="9" fill="#757575"/><rect x="321" y="826" width="9" height="9" fill="#909090"/><rect x="330" y="826" width="9" height="9" fill="#bababa"/><rect x="339" y="826" width="9" height="9" fill="#c4c4c4"/><rect x="348" y="826" width="9" height="9" fill="#d2d2d2"/><rect x="357" y="826" width="9" height="9" fill="#737373"/><rect x="366" y="826" width="9" height="9" fill="#a5a5a5"/><rect x="375" y="826" width="9" height="9" fill="#aeaeae"/><rect x="384" y="826" width="9" height="9" fill="#8d8d8d"/><rect x="150" y="835" width="9" height="9" fill="#dedede"/><rect x="159" y="835" width="9" height="9" fill="#8f8f8f"/><rect x="168" y="835" width="9" height="9" fill="#b6b6b6"/><rect x="177" y="835" width="9" height="9" fill="#7d7d7d"/><rect x="186" y="835" width="9" height="9" fill="#adadad"/><rect x="195" y="835" width="9" height="9" fill="#d0d0d0"/><rect x="204" y="835" width="9" height="9" fill="#c7c7c7"/><rect x="213" y="835" width="9" height="9" fill="#cecece"/><rect x="222" y="835" width="9" height="9" fill="#c7c7c7"/><rect x="231" y="835" width="9" height="9" fill="#828282"/><rect x="240" y="835" width="9" height="9" fill="#b0b0b0"/><rect x="249" y="835" width="9" height="9" fill="#a0a0a0"/><rect x="258" y="835" width="9" height="9" fill="#949494"/><rect x="267" y="835" width="9" height="9" fill="#bdbdbd"/><rect x="276" y="835" width="9" height="9" fill="#c7c7c7"/><rect x="285" y="835" width="9" height="9" fill="#9d9d9d"/><rect x="294" y="835" width="9" height="9" fill="#d4d4d4"/><rect x="303" y="835" width="9" height="9" fill="#6b6b6b"/><rect x="312" y="835" width="9" height="9" fill="#909090"/><rect x="321" y="835" width="9" height="9" fill="#a7a7a7"/><rect x="330" y="835" width="9" height="9" fill="#d0d0d0"/><rect x="339" y="835" width="9" height="9" fill="#d2d2d2"/><rect x="348" y="835" width="9" height="9" fill="#c9c9c9"/><rect x="366" y="835" width="9" height="9" fill="#969696"/><rect x="384" y="835" width="9" height="9" fill="#919191"/><rect x="159" y="844" width="9" height="9" fill="#b9b9b9"/><rect x="204" y="844" width="9" height="9" fill="#b5b5b5"/><rect x="213" y="844" width="9" height="9" fill="#b5b5b5"/><rect x="249" y="844" width="9" height="9" fill="#999999"/><rect x="276" y="844" width="9" height="9" fill="#868686"/><rect x="321" y="844" width="9" height="9" fill="#969696"/><rect x="348" y="844" width="9" height="9" fill="#dfdfdf"/><rect x="366" y="844" width="9" height="9" fill="#9e9e9e"/></svg>
<svg class="a" style="left:78px;top:875px" width="14" height="20" viewBox="0 0 14 20"><path d="M3 2.5 L10 10 L3 17.5" fill="none" stroke="#6c6c6c" stroke-width="3"/></svg>
<svg class="a" style="left:101px;top:870px" width="28" height="29" viewBox="0 0 28 29"><rect x="1" y="1" width="25.5" height="26.5" fill="#dde2e7" stroke="#8e9aa6" stroke-width="1.6"/><rect x="1" y="1" width="25.5" height="3" fill="#8e9aa6"/><rect x="4.5" y="7" width="8" height="2.2" fill="#9eabb8"/><rect x="14" y="7" width="9" height="2.2" fill="#9eabb8"/><rect x="4.5" y="11" width="8" height="2.2" fill="#9eabb8"/><rect x="14" y="11" width="9" height="2.2" fill="#9eabb8"/><rect x="4.5" y="15" width="8" height="2.2" fill="#9eabb8"/><rect x="14" y="15" width="9" height="2.2" fill="#9eabb8"/><rect x="4.5" y="19" width="8" height="2.2" fill="#9eabb8"/><rect x="14" y="19" width="9" height="2.2" fill="#9eabb8"/><rect x="4.5" y="23" width="8" height="2.2" fill="#9eabb8"/><rect x="14" y="23" width="9" height="2.2" fill="#9eabb8"/><rect x="1" y="27.8" width="26" height="1.2" fill="#ffffff"/></svg>
<div class="t" style="left:142.5px;top:869.40px;font-size:26.7px;color:#141414;">c</div>
<svg class="a" style="left:0;top:0" width="2378" height="1444" shape-rendering="crispEdges"><rect x="150" y="871" width="9" height="9" fill="#b3b3b3"/><rect x="168" y="871" width="9" height="9" fill="#a8a8a8"/><rect x="177" y="871" width="9" height="9" fill="#797979"/><rect x="195" y="871" width="9" height="9" fill="#8a8a8a"/><rect x="204" y="871" width="9" height="9" fill="#c1c1c1"/><rect x="222" y="871" width="9" height="9" fill="#939393"/><rect x="231" y="871" width="9" height="9" fill="#b4b4b4"/><rect x="249" y="871" width="9" height="9" fill="#7a7a7a"/><rect x="258" y="871" width="9" height="9" fill="#6f6f6f"/><rect x="267" y="871" width="9" height="9" fill="#a9a9a9"/><rect x="276" y="871" width="9" height="9" fill="#8d8d8d"/><rect x="285" y="871" width="9" height="9" fill="#a1a1a1"/><rect x="294" y="871" width="9" height="9" fill="#888888"/><rect x="303" y="871" width="9" height="9" fill="#9e9e9e"/><rect x="312" y="871" width="9" height="9" fill="#919191"/><rect x="321" y="871" width="9" height="9" fill="#d0d0d0"/><rect x="330" y="871" width="9" height="9" fill="#d4d4d4"/><rect x="339" y="871" width="9" height="9" fill="#919191"/><rect x="348" y="871" width="9" height="9" fill="#b2b2b2"/><rect x="357" y="871" width="9" height="9" fill="#cacaca"/><rect x="375" y="871" width="9" height="9" fill="#dddddd"/><rect x="150" y="880" width="9" height="9" fill="#bfbfbf"/><rect x="159" y="880" width="9" height="9" fill="#aaaaaa"/><rect x="168" y="880" width="9" height="9" fill="#d3d3d3"/><rect x="177" y="880" width="9" height="9" fill="#979797"/><rect x="186" y="880" width="9" height="9" fill="#b7b7b7"/><rect x="195" y="880" width="9" height="9" fill="#a9a9a9"/><rect x="204" y="880" width="9" height="9" fill="#c5c5c5"/><rect x="213" y="880" width="9" height="9" fill="#d9d9d9"/><rect x="231" y="880" width="9" height="9" fill="#9e9e9e"/><rect x="240" y="880" width="9" height="9" fill="#aeaeae"/><rect x="249" y="880" width="9" height="9" fill="#8b8b8b"/><rect x="258" y="880" width="9" height="9" fill="#d1d1d1"/><rect x="267" y="880" width="9" height="9" fill="#d3d3d3"/><rect x="294" y="880" width="9" height="9" fill="#d7d7d7"/><rect x="303" y="880" width="9" height="9" fill="#d8d8d8"/><rect x="312" y="880" width="9" height="9" fill="#9f9f9f"/><rect x="321" y="880" width="9" height="9" fill="#c8c8c8"/><rect x="339" y="880" width="9" height="9" fill="#a1a1a1"/><rect x="348" y="880" width="9" height="9" fill="#787878"/><rect x="357" y="880" width="9" height="9" fill="#7b7b7b"/><rect x="366" y="880" width="9" height="9" fill="#9e9e9e"/><rect x="375" y="880" width="9" height="9" fill="#dadada"/><rect x="150" y="889" width="9" height="9" fill="#727272"/><rect x="222" y="889" width="9" height="9" fill="#dddddd"/><rect x="249" y="889" width="9" height="9" fill="#bababa"/><rect x="258" y="889" width="9" height="9" fill="#c2c2c2"/><rect x="267" y="889" width="9" height="9" fill="#b7b7b7"/><rect x="276" y="889" width="9" height="9" fill="#dddddd"/><rect x="321" y="889" width="9" height="9" fill="#d1d1d1"/><rect x="366" y="889" width="9" height="9" fill="#a5a5a5"/><rect x="375" y="889" width="9" height="9" fill="#cdcdcd"/></svg>
<svg class="a" style="left:78px;top:923px" width="14" height="20" viewBox="0 0 14 20"><path d="M3 2.5 L10 10 L3 17.5" fill="none" stroke="#6c6c6c" stroke-width="3"/></svg>
<svg class="a" style="left:101px;top:918px" width="28" height="29" viewBox="0 0 28 29"><rect x="1" y="1" width="25.5" height="26.5" fill="#dde2e7" stroke="#8e9aa6" stroke-width="1.6"/><rect x="1" y="1" width="25.5" height="3" fill="#8e9aa6"/><rect x="4.5" y="7" width="8" height="2.2" fill="#9eabb8"/><rect x="14" y="7" width="9" height="2.2" fill="#9eabb8"/><rect x="4.5" y="11" width="8" height="2.2" fill="#9eabb8"/><rect x="14" y="11" width="9" height="2.2" fill="#9eabb8"/><rect x="4.5" y="15" width="8" height="2.2" fill="#9eabb8"/><rect x="14" y="15" width="9" height="2.2" fill="#9eabb8"/><rect x="4.5" y="19" width="8" height="2.2" fill="#9eabb8"/><rect x="14" y="19" width="9" height="2.2" fill="#9eabb8"/><rect x="4.5" y="23" width="8" height="2.2" fill="#9eabb8"/><rect x="14" y="23" width="9" height="2.2" fill="#9eabb8"/><rect x="1" y="27.8" width="26" height="1.2" fill="#ffffff"/></svg>
<div class="t" style="left:142.5px;top:917.40px;font-size:26.7px;color:#141414;">f</div>
<svg class="a" style="left:0;top:0" width="2378" height="1444" shape-rendering="crispEdges"><rect x="150" y="916" width="9" height="9" fill="#cdcdcd"/><rect x="168" y="916" width="9" height="9" fill="#8e8e8e"/><rect x="177" y="916" width="9" height="9" fill="#707070"/><rect x="186" y="916" width="9" height="9" fill="#838383"/><rect x="204" y="916" width="9" height="9" fill="#828282"/><rect x="231" y="916" width="9" height="9" fill="#949494"/><rect x="159" y="925" width="9" height="9" fill="#b9b9b9"/><rect x="168" y="925" width="9" height="9" fill="#bbbbbb"/><rect x="177" y="925" width="9" height="9" fill="#c3c3c3"/><rect x="186" y="925" width="9" height="9" fill="#a4a4a4"/><rect x="195" y="925" width="9" height="9" fill="#c3c3c3"/><rect x="222" y="925" width="9" height="9" fill="#c7c7c7"/><rect x="231" y="925" width="9" height="9" fill="#dedede"/><rect x="159" y="934" width="9" height="9" fill="#d6d6d6"/><rect x="177" y="934" width="9" height="9" fill="#9f9f9f"/><rect x="195" y="934" width="9" height="9" fill="#a3a3a3"/><rect x="213" y="934" width="9" height="9" fill="#cacaca"/><rect x="222" y="934" width="9" height="9" fill="#b5b5b5"/></svg>
<svg class="a" style="left:78px;top:971px" width="14" height="20" viewBox="0 0 14 20"><path d="M3 2.5 L10 10 L3 17.5" fill="none" stroke="#6c6c6c" stroke-width="3"/></svg>
<svg class="a" style="left:101px;top:966px" width="28" height="29" viewBox="0 0 28 29"><rect x="1" y="1" width="25.5" height="26.5" fill="#dde2e7" stroke="#8e9aa6" stroke-width="1.6"/><rect x="1" y="1" width="25.5" height="3" fill="#8e9aa6"/><rect x="4.5" y="7" width="8" height="2.2" fill="#9eabb8"/><rect x="14" y="7" width="9" height="2.2" fill="#9eabb8"/><rect x="4.5" y="11" width="8" height="2.2" fill="#9eabb8"/><rect x="14" y="11" width="9" height="2.2" fill="#9eabb8"/><rect x="4.5" y="15" width="8" height="2.2" fill="#9eabb8"/><rect x="14" y="15" width="9" height="2.2" fill="#9eabb8"/><rect x="4.5" y="19" width="8" height="2.2" fill="#9eabb8"/><rect x="14" y="19" width="9" height="2.2" fill="#9eabb8"/><rect x="4.5" y="23" width="8" height="2.2" fill="#9eabb8"/><rect x="14" y="23" width="9" height="2.2" fill="#9eabb8"/><rect x="1" y="27.8" width="26" height="1.2" fill="#ffffff"/></svg>
<div class="t" style="left:142.5px;top:965.40px;font-size:26.7px;color:#141414;">l</div>
<svg class="a" style="left:0;top:0" width="2378" height="1444" shape-rendering="crispEdges"><rect x="150" y="961" width="9" height="9" fill="#a5a5a5"/><rect x="168" y="961" width="9" height="9" fill="#aaaaaa"/><rect x="222" y="961" width="9" height="9" fill="#cfcfcf"/><rect x="231" y="961" width="9" height="9" fill="#d4d4d4"/><rect x="267" y="961" width="9" height="9" fill="#7f7f7f"/><rect x="303" y="961" width="9" height="9" fill="#c3c3c3"/><rect x="150" y="970" width="9" height="9" fill="#a1a1a1"/><rect x="159" y="970" width="9" height="9" fill="#686868"/><rect x="177" y="970" width="9" height="9" fill="#9d9d9d"/><rect x="186" y="970" width="9" height="9" fill="#dedede"/><rect x="204" y="970" width="9" height="9" fill="#c9c9c9"/><rect x="213" y="970" width="9" height="9" fill="#bbbbbb"/><rect x="222" y="970" width="9" height="9" fill="#bdbdbd"/><rect x="231" y="970" width="9" height="9" fill="#a6a6a6"/><rect x="240" y="970" width="9" height="9" fill="#bdbdbd"/><rect x="258" y="970" width="9" height="9" fill="#a0a0a0"/><rect x="267" y="970" width="9" height="9" fill="#c9c9c9"/><rect x="276" y="970" width="9" height="9" fill="#999999"/><rect x="285" y="970" width="9" height="9" fill="#b7b7b7"/><rect x="294" y="970" width="9" height="9" fill="#bdbdbd"/><rect x="303" y="970" width="9" height="9" fill="#a0a0a0"/><rect x="312" y="970" width="9" height="9" fill="#838383"/><rect x="321" y="970" width="9" height="9" fill="#c0c0c0"/><rect x="330" y="970" width="9" height="9" fill="#969696"/><rect x="150" y="979" width="9" height="9" fill="#8a8a8a"/><rect x="159" y="979" width="9" height="9" fill="#c8c8c8"/><rect x="168" y="979" width="9" height="9" fill="#d1d1d1"/><rect x="186" y="979" width="9" height="9" fill="#7c7c7c"/><rect x="195" y="979" width="9" height="9" fill="#a1a1a1"/><rect x="204" y="979" width="9" height="9" fill="#a4a4a4"/><rect x="213" y="979" width="9" height="9" fill="#dadada"/><rect x="222" y="979" width="9" height="9" fill="#cbcbcb"/><rect x="231" y="979" width="9" height="9" fill="#dbdbdb"/><rect x="240" y="979" width="9" height="9" fill="#6d6d6d"/><rect x="249" y="979" width="9" height="9" fill="#686868"/><rect x="258" y="979" width="9" height="9" fill="#aaaaaa"/><rect x="267" y="979" width="9" height="9" fill="#727272"/><rect x="276" y="979" width="9" height="9" fill="#d4d4d4"/><rect x="285" y="979" width="9" height="9" fill="#7c7c7c"/><rect x="294" y="979" width="9" height="9" fill="#cbcbcb"/><rect x="303" y="979" width="9" height="9" fill="#757575"/><rect x="321" y="979" width="9" height="9" fill="#9d9d9d"/><rect x="330" y="979" width="9" height="9" fill="#cccccc"/><rect x="159" y="988" width="9" height="9" fill="#8b8b8b"/><rect x="168" y="988" width="9" height="9" fill="#6f6f6f"/><rect x="186" y="988" width="9" height="9" fill="#a0a0a0"/><rect x="285" y="988" width="9" height="9" fill="#939393"/></svg>
<svg class="a" style="left:78px;top:1019px" width="14" height="20" viewBox="0 0 14 20"><path d="M3 2.5 L10 10 L3 17.5" fill="none" stroke="#6c6c6c" stroke-width="3"/></svg>
<svg class="a" style="left:101px;top:1014px" width="28" height="29" viewBox="0 0 28 29"><rect x="1" y="1" width="25.5" height="26.5" fill="#dde2e7" stroke="#8e9aa6" stroke-width="1.6"/><rect x="1" y="1" width="25.5" height="3" fill="#8e9aa6"/><rect x="4.5" y="7" width="8" height="2.2" fill="#9eabb8"/><rect x="14" y="7" width="9" height="2.2" fill="#9eabb8"/><rect x="4.5" y="11" width="8" height="2.2" fill="#9eabb8"/><rect x="14" y="11" width="9" height="2.2" fill="#9eabb8"/><rect x="4.5" y="15" width="8" height="2.2" fill="#9eabb8"/><rect x="14" y="15" width="9" height="2.2" fill="#9eabb8"/><rect x="4.5" y="19" width="8" height="2.2" fill="#9eabb8"/><rect x="14" y="19" width="9" height="2.2" fill="#9eabb8"/><rect x="4.5" y="23" width="8" height="2.2" fill="#9eabb8"/><rect x="14" y="23" width="9" height="2.2" fill="#9eabb8"/><rect x="1" y="27.8" width="26" height="1.2" fill="#ffffff"/></svg>
<div class="t" style="left:142.5px;top:1013.40px;font-size:26.7px;color:#141414;">t</div>
<svg class="a" style="left:0;top:0" width="2378" height="1444" shape-rendering="crispEdges"><rect x="159" y="1015" width="9" height="9" fill="#cdcdcd"/><rect x="168" y="1015" width="9" height="9" fill="#a8a8a8"/><rect x="177" y="1015" width="9" height="9" fill="#afafaf"/><rect x="186" y="1015" width="9" height="9" fill="#a0a0a0"/><rect x="195" y="1015" width="9" height="9" fill="#676767"/><rect x="150" y="1024" width="9" height="9" fill="#d7d7d7"/><rect x="159" y="1024" width="9" height="9" fill="#b9b9b9"/><rect x="168" y="1024" width="9" height="9" fill="#a1a1a1"/><rect x="177" y="1024" width="9" height="9" fill="#bcbcbc"/><rect x="186" y="1024" width="9" height="9" fill="#999999"/><rect x="195" y="1024" width="9" height="9" fill="#dfdfdf"/></svg>
<svg class="a" style="left:78px;top:1067px" width="14" height="20" viewBox="0 0 14 20"><path d="M3 2.5 L10 10 L3 17.5" fill="none" stroke="#6c6c6c" stroke-width="3"/></svg>
<svg class="a" style="left:101px;top:1062px" width="28" height="29" viewBox="0 0 28 29"><rect x="1" y="1" width="25.5" height="26.5" fill="#dde2e7" stroke="#8e9aa6" stroke-width="1.6"/><rect x="1" y="1" width="25.5" height="3" fill="#8e9aa6"/><rect x="4.5" y="7" width="8" height="2.2" fill="#9eabb8"/><rect x="14" y="7" width="9" height="2.2" fill="#9eabb8"/><rect x="4.5" y="11" width="8" height="2.2" fill="#9eabb8"/><rect x="14" y="11" width="9" height="2.2" fill="#9eabb8"/><rect x="4.5" y="15" width="8" height="2.2" fill="#9eabb8"/><rect x="14" y="15" width="9" height="2.2" fill="#9eabb8"/><rect x="4.5" y="19" width="8" height="2.2" fill="#9eabb8"/><rect x="14" y="19" width="9" height="2.2" fill="#9eabb8"/><rect x="4.5" y="23" width="8" height="2.2" fill="#9eabb8"/><rect x="14" y="23" width="9" height="2.2" fill="#9eabb8"/><rect x="1" y="27.8" width="26" height="1.2" fill="#ffffff"/></svg>
<div class="t" style="left:142.5px;top:1061.40px;font-size:26.7px;color:#141414;">t</div>
<svg class="a" style="left:0;top:0" width="2378" height="1444" shape-rendering="crispEdges"><rect x="159" y="1060" width="9" height="9" fill="#dadada"/><rect x="168" y="1060" width="9" height="9" fill="#9e9e9e"/><rect x="186" y="1060" width="9" height="9" fill="#828282"/><rect x="195" y="1060" width="9" height="9" fill="#878787"/><rect x="213" y="1060" width="9" height="9" fill="#9c9c9c"/><rect x="222" y="1060" width="9" height="9" fill="#868686"/><rect x="249" y="1060" width="9" height="9" fill="#cccccc"/><rect x="258" y="1060" width="9" height="9" fill="#c7c7c7"/><rect x="267" y="1060" width="9" height="9" fill="#b2b2b2"/><rect x="276" y="1060" width="9" height="9" fill="#d3d3d3"/><rect x="294" y="1060" width="9" height="9" fill="#737373"/><rect x="303" y="1060" width="9" height="9" fill="#858585"/><rect x="312" y="1060" width="9" height="9" fill="#dbdbdb"/><rect x="150" y="1069" width="9" height="9" fill="#636363"/><rect x="159" y="1069" width="9" height="9" fill="#dadada"/><rect x="168" y="1069" width="9" height="9" fill="#c0c0c0"/><rect x="177" y="1069" width="9" height="9" fill="#a8a8a8"/><rect x="186" y="1069" width="9" height="9" fill="#d1d1d1"/><rect x="195" y="1069" width="9" height="9" fill="#bfbfbf"/><rect x="204" y="1069" width="9" height="9" fill="#7c7c7c"/><rect x="213" y="1069" width="9" height="9" fill="#7e7e7e"/><rect x="231" y="1069" width="9" height="9" fill="#a5a5a5"/><rect x="240" y="1069" width="9" height="9" fill="#dddddd"/><rect x="249" y="1069" width="9" height="9" fill="#848484"/><rect x="258" y="1069" width="9" height="9" fill="#d6d6d6"/><rect x="267" y="1069" width="9" height="9" fill="#c7c7c7"/><rect x="276" y="1069" width="9" height="9" fill="#bfbfbf"/><rect x="285" y="1069" width="9" height="9" fill="#dbdbdb"/><rect x="294" y="1069" width="9" height="9" fill="#dcdcdc"/><rect x="312" y="1069" width="9" height="9" fill="#d9d9d9"/><rect x="321" y="1069" width="9" height="9" fill="#7a7a7a"/><rect x="159" y="1078" width="9" height="9" fill="#696969"/><rect x="168" y="1078" width="9" height="9" fill="#999999"/><rect x="186" y="1078" width="9" height="9" fill="#b4b4b4"/><rect x="204" y="1078" width="9" height="9" fill="#c3c3c3"/><rect x="231" y="1078" width="9" height="9" fill="#dedede"/><rect x="240" y="1078" width="9" height="9" fill="#858585"/><rect x="249" y="1078" width="9" height="9" fill="#8b8b8b"/><rect x="258" y="1078" width="9" height="9" fill="#dadada"/><rect x="267" y="1078" width="9" height="9" fill="#cfcfcf"/><rect x="285" y="1078" width="9" height="9" fill="#6a6a6a"/><rect x="294" y="1078" width="9" height="9" fill="#d9d9d9"/><rect x="303" y="1078" width="9" height="9" fill="#c9c9c9"/><rect x="312" y="1078" width="9" height="9" fill="#696969"/><rect x="321" y="1078" width="9" height="9" fill="#989898"/></svg>
<svg class="a" style="left:78px;top:1115px" width="14" height="20" viewBox="0 0 14 20"><path d="M3 2.5 L10 10 L3 17.5" fill="none" stroke="#6c6c6c" stroke-width="3"/></svg>
<svg class="a" style="left:101px;top:1110px" width="28" height="29" viewBox="0 0 28 29"><rect x="1" y="1" width="25.5" height="26.5" fill="#dde2e7" stroke="#8e9aa6" stroke-width="1.6"/><rect x="1" y="1" width="25.5" height="3" fill="#8e9aa6"/><rect x="4.5" y="7" width="8" height="2.2" fill="#9eabb8"/><rect x="14" y="7" width="9" height="2.2" fill="#9eabb8"/><rect x="4.5" y="11" width="8" height="2.2" fill="#9eabb8"/><rect x="14" y="11" width="9" height="2.2" fill="#9eabb8"/><rect x="4.5" y="15" width="8" height="2.2" fill="#9eabb8"/><rect x="14" y="15" width="9" height="2.2" fill="#9eabb8"/><rect x="4.5" y="19" width="8" height="2.2" fill="#9eabb8"/><rect x="14" y="19" width="9" height="2.2" fill="#9eabb8"/><rect x="4.5" y="23" width="8" height="2.2" fill="#9eabb8"/><rect x="14" y="23" width="9" height="2.2" fill="#9eabb8"/><rect x="1" y="27.8" width="26" height="1.2" fill="#ffffff"/></svg>
<div class="t" style="left:142.5px;top:1109.40px;font-size:26.7px;color:#141414;">t</div>
<svg class="a" style="left:0;top:0" width="2378" height="1444" shape-rendering="crispEdges"><rect x="204" y="1105" width="9" height="9" fill="#868686"/><rect x="267" y="1105" width="9" height="9" fill="#b6b6b6"/><rect x="285" y="1105" width="9" height="9" fill="#a4a4a4"/><rect x="294" y="1105" width="9" height="9" fill="#b7b7b7"/><rect x="303" y="1105" width="9" height="9" fill="#6d6d6d"/><rect x="321" y="1105" width="9" height="9" fill="#bbbbbb"/><rect x="366" y="1105" width="9" height="9" fill="#8a8a8a"/><rect x="393" y="1105" width="9" height="9" fill="#cdcdcd"/><rect x="150" y="1114" width="9" height="9" fill="#acacac"/><rect x="159" y="1114" width="9" height="9" fill="#b0b0b0"/><rect x="168" y="1114" width="9" height="9" fill="#bdbdbd"/><rect x="186" y="1114" width="9" height="9" fill="#8c8c8c"/><rect x="195" y="1114" width="9" height="9" fill="#d3d3d3"/><rect x="204" y="1114" width="9" height="9" fill="#9d9d9d"/><rect x="213" y="1114" width="9" height="9" fill="#7e7e7e"/><rect x="222" y="1114" width="9" height="9" fill="#c6c6c6"/><rect x="231" y="1114" width="9" height="9" fill="#b3b3b3"/><rect x="240" y="1114" width="9" height="9" fill="#737373"/><rect x="249" y="1114" width="9" height="9" fill="#a8a8a8"/><rect x="258" y="1114" width="9" height="9" fill="#7d7d7d"/><rect x="267" y="1114" width="9" height="9" fill="#acacac"/><rect x="276" y="1114" width="9" height="9" fill="#bdbdbd"/><rect x="294" y="1114" width="9" height="9" fill="#9d9d9d"/><rect x="303" y="1114" width="9" height="9" fill="#ababab"/><rect x="312" y="1114" width="9" height="9" fill="#d2d2d2"/><rect x="321" y="1114" width="9" height="9" fill="#b3b3b3"/><rect x="330" y="1114" width="9" height="9" fill="#c6c6c6"/><rect x="339" y="1114" width="9" height="9" fill="#6e6e6e"/><rect x="348" y="1114" width="9" height="9" fill="#b5b5b5"/><rect x="357" y="1114" width="9" height="9" fill="#868686"/><rect x="366" y="1114" width="9" height="9" fill="#9a9a9a"/><rect x="375" y="1114" width="9" height="9" fill="#dddddd"/><rect x="384" y="1114" width="9" height="9" fill="#a3a3a3"/><rect x="402" y="1114" width="9" height="9" fill="#8e8e8e"/><rect x="159" y="1123" width="9" height="9" fill="#b2b2b2"/><rect x="168" y="1123" width="9" height="9" fill="#d0d0d0"/><rect x="186" y="1123" width="9" height="9" fill="#949494"/><rect x="195" y="1123" width="9" height="9" fill="#bcbcbc"/><rect x="213" y="1123" width="9" height="9" fill="#c0c0c0"/><rect x="222" y="1123" width="9" height="9" fill="#a3a3a3"/><rect x="231" y="1123" width="9" height="9" fill="#c6c6c6"/><rect x="240" y="1123" width="9" height="9" fill="#787878"/><rect x="249" y="1123" width="9" height="9" fill="#aeaeae"/><rect x="258" y="1123" width="9" height="9" fill="#aeaeae"/><rect x="267" y="1123" width="9" height="9" fill="#d0d0d0"/><rect x="276" y="1123" width="9" height="9" fill="#898989"/><rect x="285" y="1123" width="9" height="9" fill="#a9a9a9"/><rect x="294" y="1123" width="9" height="9" fill="#707070"/><rect x="303" y="1123" width="9" height="9" fill="#a0a0a0"/><rect x="312" y="1123" width="9" height="9" fill="#bbbbbb"/><rect x="321" y="1123" width="9" height="9" fill="#6d6d6d"/><rect x="330" y="1123" width="9" height="9" fill="#b0b0b0"/><rect x="348" y="1123" width="9" height="9" fill="#d8d8d8"/><rect x="357" y="1123" width="9" height="9" fill="#848484"/><rect x="366" y="1123" width="9" height="9" fill="#9f9f9f"/><rect x="375" y="1123" width="9" height="9" fill="#cfcfcf"/><rect x="384" y="1123" width="9" height="9" fill="#dadada"/><rect x="393" y="1123" width="9" height="9" fill="#b4b4b4"/><rect x="402" y="1123" width="9" height="9" fill="#b1b1b1"/><rect x="195" y="1132" width="9" height="9" fill="#747474"/><rect x="213" y="1132" width="9" height="9" fill="#787878"/><rect x="267" y="1132" width="9" height="9" fill="#868686"/><rect x="321" y="1132" width="9" height="9" fill="#808080"/><rect x="357" y="1132" width="9" height="9" fill="#6e6e6e"/></svg>
<svg class="a" style="left:78px;top:1163px" width="14" height="20" viewBox="0 0 14 20"><path d="M3 2.5 L10 10 L3 17.5" fill="none" stroke="#6c6c6c" stroke-width="3"/></svg>
<svg class="a" style="left:101px;top:1158px" width="28" height="29" viewBox="0 0 28 29"><rect x="1" y="1" width="25.5" height="26.5" fill="#dde2e7" stroke="#8e9aa6" stroke-width="1.6"/><rect x="1" y="1" width="25.5" height="3" fill="#8e9aa6"/><rect x="4.5" y="7" width="8" height="2.2" fill="#9eabb8"/><rect x="14" y="7" width="9" height="2.2" fill="#9eabb8"/><rect x="4.5" y="11" width="8" height="2.2" fill="#9eabb8"/><rect x="14" y="11" width="9" height="2.2" fill="#9eabb8"/><rect x="4.5" y="15" width="8" height="2.2" fill="#9eabb8"/><rect x="14" y="15" width="9" height="2.2" fill="#9eabb8"/><rect x="4.5" y="19" width="8" height="2.2" fill="#9eabb8"/><rect x="14" y="19" width="9" height="2.2" fill="#9eabb8"/><rect x="4.5" y="23" width="8" height="2.2" fill="#9eabb8"/><rect x="14" y="23" width="9" height="2.2" fill="#9eabb8"/><rect x="1" y="27.8" width="26" height="1.2" fill="#ffffff"/></svg>
<div class="t" style="left:142.5px;top:1157.40px;font-size:26.7px;color:#141414;">t</div>
<svg class="a" style="left:0;top:0" width="2378" height="1444" shape-rendering="crispEdges"><rect x="150" y="1159" width="9" height="9" fill="#d2d2d2"/><rect x="159" y="1159" width="9" height="9" fill="#626262"/><rect x="168" y="1159" width="9" height="9" fill="#898989"/><rect x="177" y="1159" width="9" height="9" fill="#d1d1d1"/><rect x="186" y="1159" width="9" height="9" fill="#b5b5b5"/><rect x="195" y="1159" width="9" height="9" fill="#8f8f8f"/><rect x="204" y="1159" width="9" height="9" fill="#9d9d9d"/><rect x="213" y="1159" width="9" height="9" fill="#dbdbdb"/><rect x="222" y="1159" width="9" height="9" fill="#676767"/><rect x="231" y="1159" width="9" height="9" fill="#dcdcdc"/><rect x="240" y="1159" width="9" height="9" fill="#b6b6b6"/><rect x="249" y="1159" width="9" height="9" fill="#bfbfbf"/><rect x="258" y="1159" width="9" height="9" fill="#9f9f9f"/><rect x="267" y="1159" width="9" height="9" fill="#828282"/><rect x="276" y="1159" width="9" height="9" fill="#666666"/><rect x="285" y="1159" width="9" height="9" fill="#c2c2c2"/><rect x="294" y="1159" width="9" height="9" fill="#919191"/><rect x="303" y="1159" width="9" height="9" fill="#cfcfcf"/><rect x="312" y="1159" width="9" height="9" fill="#d7d7d7"/><rect x="321" y="1159" width="9" height="9" fill="#a7a7a7"/><rect x="330" y="1159" width="9" height="9" fill="#727272"/><rect x="339" y="1159" width="9" height="9" fill="#cfcfcf"/><rect x="348" y="1159" width="9" height="9" fill="#959595"/><rect x="357" y="1159" width="9" height="9" fill="#b5b5b5"/><rect x="366" y="1159" width="9" height="9" fill="#c0c0c0"/><rect x="375" y="1159" width="9" height="9" fill="#d9d9d9"/><rect x="384" y="1159" width="9" height="9" fill="#bcbcbc"/><rect x="402" y="1159" width="9" height="9" fill="#838383"/><rect x="411" y="1159" width="9" height="9" fill="#d5d5d5"/><rect x="159" y="1168" width="9" height="9" fill="#b6b6b6"/><rect x="168" y="1168" width="9" height="9" fill="#cacaca"/><rect x="177" y="1168" width="9" height="9" fill="#d3d3d3"/><rect x="186" y="1168" width="9" height="9" fill="#a9a9a9"/><rect x="195" y="1168" width="9" height="9" fill="#838383"/><rect x="204" y="1168" width="9" height="9" fill="#c7c7c7"/><rect x="213" y="1168" width="9" height="9" fill="#646464"/><rect x="222" y="1168" width="9" height="9" fill="#a0a0a0"/><rect x="231" y="1168" width="9" height="9" fill="#989898"/><rect x="240" y="1168" width="9" height="9" fill="#dadada"/><rect x="249" y="1168" width="9" height="9" fill="#a3a3a3"/><rect x="267" y="1168" width="9" height="9" fill="#adadad"/><rect x="276" y="1168" width="9" height="9" fill="#d0d0d0"/><rect x="285" y="1168" width="9" height="9" fill="#888888"/><rect x="294" y="1168" width="9" height="9" fill="#898989"/><rect x="303" y="1168" width="9" height="9" fill="#a9a9a9"/><rect x="312" y="1168" width="9" height="9" fill="#dddddd"/><rect x="321" y="1168" width="9" height="9" fill="#b1b1b1"/><rect x="339" y="1168" width="9" height="9" fill="#a4a4a4"/><rect x="357" y="1168" width="9" height="9" fill="#d1d1d1"/><rect x="366" y="1168" width="9" height="9" fill="#dbdbdb"/><rect x="375" y="1168" width="9" height="9" fill="#d4d4d4"/><rect x="384" y="1168" width="9" height="9" fill="#868686"/><rect x="393" y="1168" width="9" height="9" fill="#a9a9a9"/><rect x="402" y="1168" width="9" height="9" fill="#a5a5a5"/><rect x="411" y="1168" width="9" height="9" fill="#8c8c8c"/><rect x="177" y="1177" width="9" height="9" fill="#8b8b8b"/><rect x="222" y="1177" width="9" height="9" fill="#ababab"/><rect x="249" y="1177" width="9" height="9" fill="#bfbfbf"/><rect x="285" y="1177" width="9" height="9" fill="#737373"/><rect x="348" y="1177" width="9" height="9" fill="#d6d6d6"/><rect x="357" y="1177" width="9" height="9" fill="#7a7a7a"/><rect x="393" y="1177" width="9" height="9" fill="#6a6a6a"/><rect x="402" y="1177" width="9" height="9" fill="#d8d8d8"/><rect x="411" y="1177" width="9" height="9" fill="#a1a1a1"/></svg>
<svg class="a" style="left:78px;top:1211px" width="14" height="20" viewBox="0 0 14 20"><path d="M3 2.5 L10 10 L3 17.5" fill="none" stroke="#6c6c6c" stroke-width="3"/></svg>
<svg class="a" style="left:101px;top:1206px" width="28" height="29" viewBox="0 0 28 29"><rect x="1" y="1" width="25.5" height="26.5" fill="#dde2e7" stroke="#8e9aa6" stroke-width="1.6"/><rect x="1" y="1" width="25.5" height="3" fill="#8e9aa6"/><rect x="4.5" y="7" width="8" height="2.2" fill="#9eabb8"/><rect x="14" y="7" width="9" height="2.2" fill="#9eabb8"/><rect x="4.5" y="11" width="8" height="2.2" fill="#9eabb8"/><rect x="14" y="11" width="9" height="2.2" fill="#9eabb8"/><rect x="4.5" y="15" width="8" height="2.2" fill="#9eabb8"/><rect x="14" y="15" width="9" height="2.2" fill="#9eabb8"/><rect x="4.5" y="19" width="8" height="2.2" fill="#9eabb8"/><rect x="14" y="19" width="9" height="2.2" fill="#9eabb8"/><rect x="4.5" y="23" width="8" height="2.2" fill="#9eabb8"/><rect x="14" y="23" width="9" height="2.2" fill="#9eabb8"/><rect x="1" y="27.8" width="26" height="1.2" fill="#ffffff"/></svg>
<div class="t" style="left:142.5px;top:1205.40px;font-size:26.7px;color:#141414;">t</div>
<svg class="a" style="left:0;top:0" width="2378" height="1444" shape-rendering="crispEdges"><rect x="150" y="1204" width="9" height="9" fill="#737373"/><rect x="168" y="1204" width="9" height="9" fill="#b8b8b8"/><rect x="177" y="1204" width="9" height="9" fill="#dedede"/><rect x="195" y="1204" width="9" height="9" fill="#6c6c6c"/><rect x="222" y="1204" width="9" height="9" fill="#747474"/><rect x="249" y="1204" width="9" height="9" fill="#757575"/><rect x="276" y="1204" width="9" height="9" fill="#9a9a9a"/><rect x="150" y="1213" width="9" height="9" fill="#d7d7d7"/><rect x="159" y="1213" width="9" height="9" fill="#878787"/><rect x="177" y="1213" width="9" height="9" fill="#d2d2d2"/><rect x="186" y="1213" width="9" height="9" fill="#919191"/><rect x="213" y="1213" width="9" height="9" fill="#6f6f6f"/><rect x="222" y="1213" width="9" height="9" fill="#bcbcbc"/><rect x="231" y="1213" width="9" height="9" fill="#7e7e7e"/><rect x="240" y="1213" width="9" height="9" fill="#dcdcdc"/><rect x="249" y="1213" width="9" height="9" fill="#707070"/><rect x="258" y="1213" width="9" height="9" fill="#919191"/><rect x="267" y="1213" width="9" height="9" fill="#848484"/><rect x="276" y="1213" width="9" height="9" fill="#969696"/><rect x="285" y="1213" width="9" height="9" fill="#848484"/><rect x="150" y="1222" width="9" height="9" fill="#b2b2b2"/><rect x="168" y="1222" width="9" height="9" fill="#757575"/><rect x="177" y="1222" width="9" height="9" fill="#6e6e6e"/><rect x="186" y="1222" width="9" height="9" fill="#8c8c8c"/><rect x="204" y="1222" width="9" height="9" fill="#a8a8a8"/><rect x="213" y="1222" width="9" height="9" fill="#989898"/><rect x="240" y="1222" width="9" height="9" fill="#8c8c8c"/><rect x="249" y="1222" width="9" height="9" fill="#afafaf"/><rect x="258" y="1222" width="9" height="9" fill="#8c8c8c"/><rect x="267" y="1222" width="9" height="9" fill="#c9c9c9"/></svg>
<svg class="a" style="left:78px;top:1259px" width="14" height="20" viewBox="0 0 14 20"><path d="M3 2.5 L10 10 L3 17.5" fill="none" stroke="#6c6c6c" stroke-width="3"/></svg>
<svg class="a" style="left:101px;top:1254px" width="28" height="29" viewBox="0 0 28 29"><rect x="1" y="1" width="25.5" height="26.5" fill="#dde2e7" stroke="#8e9aa6" stroke-width="1.6"/><rect x="1" y="1" width="25.5" height="3" fill="#8e9aa6"/><rect x="4.5" y="7" width="8" height="2.2" fill="#9eabb8"/><rect x="14" y="7" width="9" height="2.2" fill="#9eabb8"/><rect x="4.5" y="11" width="8" height="2.2" fill="#9eabb8"/><rect x="14" y="11" width="9" height="2.2" fill="#9eabb8"/><rect x="4.5" y="15" width="8" height="2.2" fill="#9eabb8"/><rect x="14" y="15" width="9" height="2.2" fill="#9eabb8"/><rect x="4.5" y="19" width="8" height="2.2" fill="#9eabb8"/><rect x="14" y="19" width="9" height="2.2" fill="#9eabb8"/><rect x="4.5" y="23" width="8" height="2.2" fill="#9eabb8"/><rect x="14" y="23" width="9" height="2.2" fill="#9eabb8"/><rect x="1" y="27.8" width="26" height="1.2" fill="#ffffff"/></svg>
<div class="t" style="left:142.5px;top:1253.40px;font-size:26.7px;color:#141414;">u</div>
<svg class="a" style="left:0;top:0" width="2378" height="1444" shape-rendering="crispEdges"><rect x="159" y="1249" width="9" height="9" fill="#757575"/><rect x="168" y="1249" width="9" height="9" fill="#c6c6c6"/><rect x="240" y="1249" width="9" height="9" fill="#686868"/><rect x="294" y="1249" width="9" height="9" fill="#d2d2d2"/><rect x="150" y="1258" width="9" height="9" fill="#dddddd"/><rect x="159" y="1258" width="9" height="9" fill="#c2c2c2"/><rect x="168" y="1258" width="9" height="9" fill="#888888"/><rect x="177" y="1258" width="9" height="9" fill="#9f9f9f"/><rect x="186" y="1258" width="9" height="9" fill="#d2d2d2"/><rect x="195" y="1258" width="9" height="9" fill="#c0c0c0"/><rect x="204" y="1258" width="9" height="9" fill="#c6c6c6"/><rect x="222" y="1258" width="9" height="9" fill="#d0d0d0"/><rect x="231" y="1258" width="9" height="9" fill="#c3c3c3"/><rect x="240" y="1258" width="9" height="9" fill="#929292"/><rect x="258" y="1258" width="9" height="9" fill="#d8d8d8"/><rect x="267" y="1258" width="9" height="9" fill="#8b8b8b"/><rect x="276" y="1258" width="9" height="9" fill="#b5b5b5"/><rect x="285" y="1258" width="9" height="9" fill="#6f6f6f"/><rect x="294" y="1258" width="9" height="9" fill="#646464"/><rect x="303" y="1258" width="9" height="9" fill="#dadada"/><rect x="330" y="1258" width="9" height="9" fill="#dddddd"/><rect x="339" y="1258" width="9" height="9" fill="#cccccc"/><rect x="348" y="1258" width="9" height="9" fill="#dadada"/><rect x="357" y="1258" width="9" height="9" fill="#6c6c6c"/><rect x="366" y="1258" width="9" height="9" fill="#b6b6b6"/><rect x="375" y="1258" width="9" height="9" fill="#bdbdbd"/><rect x="150" y="1267" width="9" height="9" fill="#cccccc"/><rect x="159" y="1267" width="9" height="9" fill="#bfbfbf"/><rect x="168" y="1267" width="9" height="9" fill="#adadad"/><rect x="177" y="1267" width="9" height="9" fill="#afafaf"/><rect x="186" y="1267" width="9" height="9" fill="#aaaaaa"/><rect x="195" y="1267" width="9" height="9" fill="#cacaca"/><rect x="204" y="1267" width="9" height="9" fill="#d5d5d5"/><rect x="213" y="1267" width="9" height="9" fill="#ababab"/><rect x="222" y="1267" width="9" height="9" fill="#bebebe"/><rect x="231" y="1267" width="9" height="9" fill="#7c7c7c"/><rect x="240" y="1267" width="9" height="9" fill="#d8d8d8"/><rect x="249" y="1267" width="9" height="9" fill="#cbcbcb"/><rect x="258" y="1267" width="9" height="9" fill="#666666"/><rect x="267" y="1267" width="9" height="9" fill="#b7b7b7"/><rect x="276" y="1267" width="9" height="9" fill="#a8a8a8"/><rect x="303" y="1267" width="9" height="9" fill="#717171"/><rect x="312" y="1267" width="9" height="9" fill="#dadada"/><rect x="321" y="1267" width="9" height="9" fill="#c7c7c7"/><rect x="330" y="1267" width="9" height="9" fill="#bbbbbb"/><rect x="339" y="1267" width="9" height="9" fill="#cfcfcf"/><rect x="348" y="1267" width="9" height="9" fill="#d1d1d1"/><rect x="366" y="1267" width="9" height="9" fill="#777777"/><rect x="375" y="1267" width="9" height="9" fill="#606060"/><rect x="177" y="1276" width="9" height="9" fill="#cdcdcd"/><rect x="222" y="1276" width="9" height="9" fill="#b6b6b6"/><rect x="249" y="1276" width="9" height="9" fill="#606060"/></svg>
<svg class="a" style="left:78px;top:1307px" width="14" height="20" viewBox="0 0 14 20"><path d="M3 2.5 L10 10 L3 17.5" fill="none" stroke="#6c6c6c" stroke-width="3"/></svg>
<svg class="a" style="left:101px;top:1302px" width="28" height="29" viewBox="0 0 28 29"><rect x="1" y="1" width="25.5" height="26.5" fill="#dde2e7" stroke="#8e9aa6" stroke-width="1.6"/><rect x="1" y="1" width="25.5" height="3" fill="#8e9aa6"/><rect x="4.5" y="7" width="8" height="2.2" fill="#9eabb8"/><rect x="14" y="7" width="9" height="2.2" fill="#9eabb8"/><rect x="4.5" y="11" width="8" height="2.2" fill="#9eabb8"/><rect x="14" y="11" width="9" height="2.2" fill="#9eabb8"/><rect x="4.5" y="15" width="8" height="2.2" fill="#9eabb8"/><rect x="14" y="15" width="9" height="2.2" fill="#9eabb8"/><rect x="4.5" y="19" width="8" height="2.2" fill="#9eabb8"/><rect x="14" y="19" width="9" height="2.2" fill="#9eabb8"/><rect x="4.5" y="23" width="8" height="2.2" fill="#9eabb8"/><rect x="14" y="23" width="9" height="2.2" fill="#9eabb8"/><rect x="1" y="27.8" width="26" height="1.2" fill="#ffffff"/></svg>
<div class="t" style="left:142.5px;top:1301.40px;font-size:26.7px;color:#141414;">u</div>
<svg class="a" style="left:0;top:0" width="2378" height="1444" shape-rendering="crispEdges"><rect x="150" y="1303" width="9" height="9" fill="#b5b5b5"/><rect x="159" y="1303" width="9" height="9" fill="#5f5f5f"/><rect x="168" y="1303" width="9" height="9" fill="#c5c5c5"/><rect x="177" y="1303" width="9" height="9" fill="#a8a8a8"/><rect x="186" y="1303" width="9" height="9" fill="#9f9f9f"/><rect x="195" y="1303" width="9" height="9" fill="#d2d2d2"/><rect x="150" y="1312" width="9" height="9" fill="#a4a4a4"/><rect x="159" y="1312" width="9" height="9" fill="#c7c7c7"/><rect x="168" y="1312" width="9" height="9" fill="#6b6b6b"/><rect x="177" y="1312" width="9" height="9" fill="#acacac"/><rect x="186" y="1312" width="9" height="9" fill="#a3a3a3"/><rect x="195" y="1312" width="9" height="9" fill="#999999"/><rect x="159" y="1321" width="9" height="9" fill="#a6a6a6"/></svg>
<svg class="a" style="left:78px;top:1355px" width="14" height="20" viewBox="0 0 14 20"><path d="M3 2.5 L10 10 L3 17.5" fill="none" stroke="#6c6c6c" stroke-width="3"/></svg>
<svg class="a" style="left:101px;top:1350px" width="28" height="29" viewBox="0 0 28 29"><rect x="1" y="1" width="25.5" height="26.5" fill="#dde2e7" stroke="#8e9aa6" stroke-width="1.6"/><rect x="1" y="1" width="25.5" height="3" fill="#8e9aa6"/><rect x="4.5" y="7" width="8" height="2.2" fill="#9eabb8"/><rect x="14" y="7" width="9" height="2.2" fill="#9eabb8"/><rect x="4.5" y="11" width="8" height="2.2" fill="#9eabb8"/><rect x="14" y="11" width="9" height="2.2" fill="#9eabb8"/><rect x="4.5" y="15" width="8" height="2.2" fill="#9eabb8"/><rect x="14" y="15" width="9" height="2.2" fill="#9eabb8"/><rect x="4.5" y="19" width="8" height="2.2" fill="#9eabb8"/><rect x="14" y="19" width="9" height="2.2" fill="#9eabb8"/><rect x="4.5" y="23" width="8" height="2.2" fill="#9eabb8"/><rect x="14" y="23" width="9" height="2.2" fill="#9eabb8"/><rect x="1" y="27.8" width="26" height="1.2" fill="#ffffff"/></svg>
<div class="t" style="left:142.5px;top:1349.40px;font-size:26.7px;color:#141414;">u</div>
<svg class="a" style="left:0;top:0" width="2378" height="1444" shape-rendering="crispEdges"><rect x="150" y="1348" width="9" height="9" fill="#7e7e7e"/><rect x="159" y="1348" width="9" height="9" fill="#7d7d7d"/><rect x="168" y="1348" width="9" height="9" fill="#767676"/><rect x="177" y="1348" width="9" height="9" fill="#b2b2b2"/><rect x="186" y="1348" width="9" height="9" fill="#cccccc"/><rect x="195" y="1348" width="9" height="9" fill="#dddddd"/><rect x="204" y="1348" width="9" height="9" fill="#7e7e7e"/><rect x="213" y="1348" width="9" height="9" fill="#a1a1a1"/><rect x="222" y="1348" width="9" height="9" fill="#c1c1c1"/><rect x="240" y="1348" width="9" height="9" fill="#bababa"/><rect x="150" y="1357" width="9" height="9" fill="#b0b0b0"/><rect x="168" y="1357" width="9" height="9" fill="#7f7f7f"/><rect x="177" y="1357" width="9" height="9" fill="#d6d6d6"/><rect x="186" y="1357" width="9" height="9" fill="#636363"/><rect x="195" y="1357" width="9" height="9" fill="#959595"/><rect x="204" y="1357" width="9" height="9" fill="#8c8c8c"/><rect x="213" y="1357" width="9" height="9" fill="#b0b0b0"/><rect x="231" y="1357" width="9" height="9" fill="#d9d9d9"/><rect x="240" y="1357" width="9" height="9" fill="#8f8f8f"/><rect x="249" y="1357" width="9" height="9" fill="#b5b5b5"/><rect x="150" y="1366" width="9" height="9" fill="#8b8b8b"/><rect x="213" y="1366" width="9" height="9" fill="#cdcdcd"/><rect x="249" y="1366" width="9" height="9" fill="#aaaaaa"/></svg>
<div class="a" style="left:0px;top:1385px;width:494px;height:19px;background:#d3d3d3;"></div>
<div class="a" style="left:237px;top:1388.5px;width:12px;height:12px;background:#bebebe;border-radius:50%"></div>
<div class="a" style="left:0px;top:1404px;width:2378px;height:40px;background:linear-gradient(#dcdcdc,#c8c8c8);"></div>
<div class="a" style="left:0px;top:1403.5px;width:2378px;height:1px;background:#bdbdbd;"></div>
<div class="t" style="left:10px;top:1415.99px;font-size:23.4px;color:#262626;letter-spacing:-0.028px;">Query Completed</div>
</body></html>
